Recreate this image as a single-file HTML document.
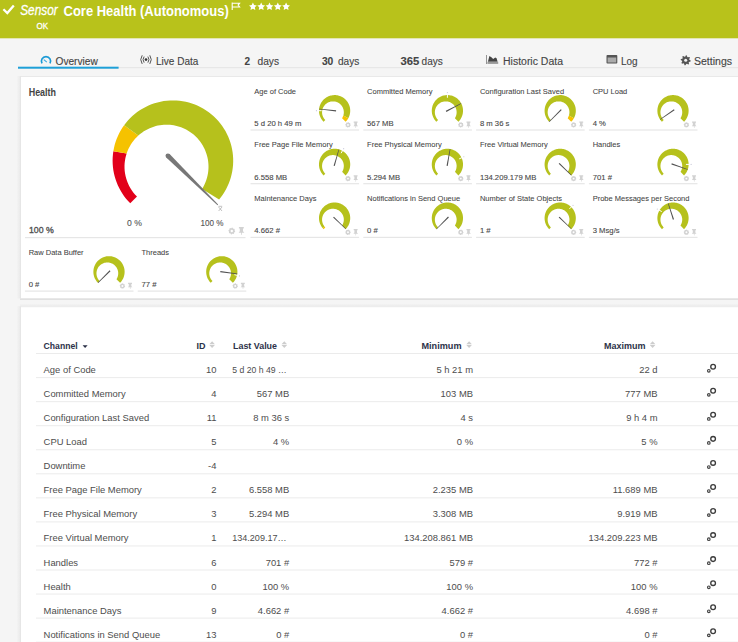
<!DOCTYPE html>
<html><head><meta charset="utf-8"><style>
html,body{margin:0;padding:0;width:738px;height:642px;overflow:hidden;background:#f5f5f5;}
svg{display:block;font-family:"Liberation Sans", sans-serif;}
</style></head><body>
<svg width="738" height="642" viewBox="0 0 738 642">
<rect x="0" y="0" width="738" height="642" fill="#f5f5f5"/>
<rect x="0" y="0" width="738" height="38.3" fill="#b8c21b"/>
<polyline points="3.4,9.2 7.3,13 13.8,5.4" fill="none" stroke="#fff" stroke-width="2.3"/>
<text x="20.20" y="14.70" font-size="14.3" fill="#fff" font-weight="normal" font-style="italic" text-anchor="start" textLength="37.60" lengthAdjust="spacingAndGlyphs"  stroke="#fff" stroke-width="0.3">Sensor</text>
<text x="63.50" y="15.60" font-size="14.2" fill="#fff" font-weight="bold" font-style="normal" text-anchor="start" textLength="165.30" lengthAdjust="spacingAndGlyphs" >Core Health (Autonomous)</text>
<path d="M232.2,2.6 V10 M232.2,3.2 H239.6 L238.1,5.1 L239.6,7.0 H232.2" fill="none" stroke="#fff" stroke-width="1.1"/>
<polygon points="252.90,2.60 254.10,5.04 256.80,5.43 254.85,7.33 255.31,10.02 252.90,8.75 250.49,10.02 250.95,7.33 249.00,5.43 251.70,5.04" fill="#fff"/>
<polygon points="261.20,2.60 262.40,5.04 265.10,5.43 263.15,7.33 263.61,10.02 261.20,8.75 258.79,10.02 259.25,7.33 257.30,5.43 260.00,5.04" fill="#fff"/>
<polygon points="269.50,2.60 270.70,5.04 273.40,5.43 271.45,7.33 271.91,10.02 269.50,8.75 267.09,10.02 267.55,7.33 265.60,5.43 268.30,5.04" fill="#fff"/>
<polygon points="277.80,2.60 279.00,5.04 281.70,5.43 279.75,7.33 280.21,10.02 277.80,8.75 275.39,10.02 275.85,7.33 273.90,5.43 276.60,5.04" fill="#fff"/>
<polygon points="286.10,2.60 287.30,5.04 290.00,5.43 288.05,7.33 288.51,10.02 286.10,8.75 283.69,10.02 284.15,7.33 282.20,5.43 284.90,5.04" fill="#fff"/>
<text x="36.40" y="28.60" font-size="8.8" fill="#fff" font-weight="normal" font-style="normal" text-anchor="start" textLength="11.60" lengthAdjust="spacingAndGlyphs"  stroke="#fff" stroke-width="0.3">OK</text>
<rect x="18" y="67.2" width="720" height="1" fill="#e4e4e4"/>
<rect x="18" y="66.7" width="100.6" height="2" fill="#1ea0d8"/>
<text x="55.50" y="64.50" font-size="10" fill="#444" font-weight="normal" font-style="normal" text-anchor="start" textLength="42.30" lengthAdjust="spacingAndGlyphs"  stroke="#444" stroke-width="0.12">Overview</text>
<text x="156.00" y="64.50" font-size="10" fill="#444" font-weight="normal" font-style="normal" text-anchor="start" textLength="42.30" lengthAdjust="spacingAndGlyphs"  stroke="#444" stroke-width="0.12">Live Data</text>
<text x="244.50" y="64.50" font-size="10" fill="#444" font-weight="bold" font-style="normal" text-anchor="start"  stroke="#444" stroke-width="0.12">2</text>
<text x="257.50" y="64.50" font-size="10" fill="#444" font-weight="normal" font-style="normal" text-anchor="start" textLength="21.50" lengthAdjust="spacingAndGlyphs"  stroke="#444" stroke-width="0.12">days</text>
<text x="321.90" y="64.50" font-size="10" fill="#444" font-weight="bold" font-style="normal" text-anchor="start" textLength="11.40" lengthAdjust="spacingAndGlyphs"  stroke="#444" stroke-width="0.12">30</text>
<text x="338.00" y="64.50" font-size="10" fill="#444" font-weight="normal" font-style="normal" text-anchor="start" textLength="21.30" lengthAdjust="spacingAndGlyphs"  stroke="#444" stroke-width="0.12">days</text>
<text x="400.40" y="64.50" font-size="10" fill="#444" font-weight="bold" font-style="normal" text-anchor="start" textLength="18.80" lengthAdjust="spacingAndGlyphs"  stroke="#444" stroke-width="0.12">365</text>
<text x="421.60" y="64.50" font-size="10" fill="#444" font-weight="normal" font-style="normal" text-anchor="start" textLength="21.20" lengthAdjust="spacingAndGlyphs"  stroke="#444" stroke-width="0.12">days</text>
<text x="503.00" y="64.50" font-size="10" fill="#444" font-weight="normal" font-style="normal" text-anchor="start" textLength="60.00" lengthAdjust="spacingAndGlyphs"  stroke="#444" stroke-width="0.12">Historic Data</text>
<text x="621.00" y="64.50" font-size="10" fill="#444" font-weight="normal" font-style="normal" text-anchor="start" textLength="16.60" lengthAdjust="spacingAndGlyphs"  stroke="#444" stroke-width="0.12">Log</text>
<text x="694.00" y="64.50" font-size="10" fill="#444" font-weight="normal" font-style="normal" text-anchor="start" textLength="38.00" lengthAdjust="spacingAndGlyphs"  stroke="#444" stroke-width="0.12">Settings</text>
<path d="M42.0,63.4 A4.6,4.6 0 1 1 50.0,63.4" fill="none" stroke="#1a9ad6" stroke-width="1.7"/>
<path d="M43.8,59.6 L46.8,62.1" stroke="#3aa6dd" stroke-width="1.1"/>
<circle cx="146" cy="59.6" r="1.35" fill="#333"/>
<path d="M144.1,56.6 A5.2,5.2 0 0 0 144.1,62.6 M147.9,56.6 A5.2,5.2 0 0 1 147.9,62.6 M142.2,55.3 A7.6,7.6 0 0 0 142.2,63.9 M149.8,55.3 A7.6,7.6 0 0 1 149.8,63.9" fill="none" stroke="#555" stroke-width="1"/>
<rect x="486" y="55" width="0.9" height="9" fill="#888"/>
<polygon points="487.9,61.8 489.4,56 491.4,57.3 493.2,59 495.2,57.5 496.6,58.2 497.6,61.8" fill="#444"/>
<rect x="487.4" y="61.8" width="10.8" height="2.1" fill="#9a9a9a"/>
<rect x="606.5" y="55.1" width="10.8" height="8.4" rx="0.8" fill="#555"/>
<rect x="607.6" y="57.5" width="8.6" height="5.0" fill="#aaa"/>
<polygon points="690.69,60.55 690.55,61.51 689.04,61.88 688.67,62.50 689.06,64.00 688.27,64.59 686.95,63.78 686.24,63.96 685.45,65.29 684.49,65.15 684.12,63.64 683.50,63.27 682.00,63.66 681.41,62.87 682.22,61.55 682.04,60.84 680.71,60.05 680.85,59.09 682.36,58.72 682.73,58.10 682.34,56.60 683.13,56.01 684.45,56.82 685.16,56.64 685.95,55.31 686.91,55.45 687.28,56.96 687.90,57.33 689.40,56.94 689.99,57.73 689.18,59.05 689.36,59.76" fill="#555"/><circle cx="685.7" cy="60.3" r="1.5" fill="#f5f5f5"/>
<defs><linearGradient id="shl" x1="0" x2="1" y1="0" y2="0"><stop offset="0" stop-color="#f5f5f5"/><stop offset="1" stop-color="#ebebeb"/></linearGradient><linearGradient id="sht" x1="0" x2="0" y1="0" y2="1"><stop offset="0" stop-color="#f5f5f5"/><stop offset="1" stop-color="#ececec"/></linearGradient></defs>
<rect x="16.5" y="76" width="3.5" height="222.5" fill="url(#shl)"/>
<rect x="16.5" y="306.2" width="3.5" height="340" fill="url(#shl)"/>
<rect x="20" y="303.5" width="720" height="2.7" fill="url(#sht)"/>
<rect x="20" y="76" width="730" height="222.5" fill="#fff"/>
<rect x="20" y="76" width="730" height="1" fill="#e9e9e9"/>
<rect x="20" y="76" width="1" height="222.5" fill="#e6e6e6"/>
<rect x="20" y="298.3" width="718" height="1.7" fill="#e0e0e0"/>
<rect x="20" y="306.2" width="730" height="400" fill="#fff"/>
<rect x="20" y="306.2" width="730" height="1" fill="#e9e9e9"/>
<rect x="20" y="306.2" width="1" height="400" fill="#e6e6e6"/>
<text x="28.70" y="95.60" font-size="10" fill="#444" font-weight="bold" font-style="normal" text-anchor="start" textLength="27.30" lengthAdjust="spacingAndGlyphs" >Health</text>
<polygon points="130.26,203.34 128.09,201.05 126.04,198.65 124.12,196.14 122.33,193.54 120.68,190.85 119.17,188.08 117.81,185.23 116.61,182.31 115.55,179.33 114.65,176.31 113.92,173.24 113.34,170.13 112.93,167.00 112.68,163.86 112.60,160.70 112.68,157.54 112.93,154.40 113.34,151.27 126.67,153.38 125.95,155.77 125.37,158.21 124.93,160.70 124.64,163.23 124.51,165.79 124.53,168.36 124.71,170.94 125.06,173.52 125.56,176.08 126.23,178.62 127.05,181.11 128.03,183.56 129.17,185.95 130.46,188.26 131.89,190.49 133.46,192.63 135.17,194.67 137.00,196.60" fill="#e2001a"/>
<polygon points="113.34,151.27 113.92,148.16 114.65,145.09 115.55,142.07 116.61,139.09 117.81,136.17 119.17,133.32 120.68,130.55 122.33,127.86 124.12,125.26 138.31,135.57 136.65,137.16 135.06,138.85 133.55,140.65 132.14,142.55 130.82,144.55 129.60,146.63 128.50,148.80 127.52,151.05 126.67,153.38" fill="#f5c200"/>
<polygon points="124.12,125.26 126.05,122.74 128.11,120.33 130.30,118.02 132.60,115.84 135.02,113.78 137.54,111.86 140.16,110.06 142.87,108.41 145.66,106.90 148.53,105.54 151.47,104.34 154.46,103.29 157.51,102.40 160.60,101.67 163.72,101.10 166.87,100.70 170.04,100.47 173.21,100.40 176.38,100.50 179.55,100.77 182.69,101.20 185.81,101.80 188.89,102.56 191.93,103.48 194.91,104.56 197.84,105.80 200.69,107.19 203.47,108.72 206.16,110.40 208.76,112.22 211.26,114.18 213.66,116.26 215.94,118.47 218.10,120.79 220.14,123.22 222.05,125.76 223.82,128.40 225.45,131.12 226.93,133.93 228.26,136.81 229.44,139.75 230.47,142.76 231.33,145.81 232.04,148.91 232.57,152.03 232.95,155.19 233.15,158.35 233.19,161.53 233.07,164.70 232.77,167.86 232.31,171.00 231.69,174.11 230.90,177.19 229.95,180.22 228.85,183.19 227.59,186.11 226.17,188.95 224.61,191.71 222.91,194.39 221.07,196.98 219.09,199.46 202.13,188.93 203.26,187.02 204.27,185.07 205.17,183.09 205.96,181.09 206.63,179.08 207.20,177.07 207.66,175.05 208.02,173.03 208.28,171.02 208.44,169.02 208.50,167.04 208.47,165.08 208.35,163.14 208.14,161.22 207.85,159.34 207.48,157.49 207.02,155.66 206.50,153.88 205.89,152.13 205.22,150.42 204.47,148.76 203.66,147.13 202.78,145.55 201.84,144.01 200.84,142.52 199.78,141.08 198.66,139.68 197.48,138.34 196.24,137.05 194.95,135.81 193.61,134.62 192.22,133.49 190.77,132.42 189.28,131.41 187.73,130.46 186.14,129.58 184.51,128.76 182.83,128.00 181.10,127.32 179.34,126.71 177.53,126.17 175.69,125.72 173.81,125.34 171.90,125.05 169.96,124.84 167.99,124.73 166.00,124.70 163.99,124.78 161.96,124.95 159.92,125.22 157.87,125.60 155.82,126.08 153.77,126.68 151.73,127.38 149.71,128.20 147.71,129.14 145.74,130.19 143.81,131.36 141.92,132.64 140.08,134.05 138.31,135.57" fill="#b6c11c"/>
<polygon points="166.23,157.51 217.52,205.18 218.15,204.54 169.59,154.08" fill="#777"/>
<circle cx="167.91" cy="155.79" r="2.4" fill="#777"/>
<path d="M218.4,206.3 H222.2 M218.6,207 L222,211 M222,207 L218.6,211" stroke="#999" stroke-width="0.6"/>
<text x="134.50" y="225.80" font-size="9.6" fill="#555" font-weight="normal" font-style="normal" text-anchor="middle" textLength="14.90" lengthAdjust="spacingAndGlyphs"  stroke="#555" stroke-width="0.12">0 %</text>
<text x="212.00" y="225.80" font-size="9.6" fill="#555" font-weight="normal" font-style="normal" text-anchor="middle" textLength="23.00" lengthAdjust="spacingAndGlyphs"  stroke="#555" stroke-width="0.12">100 %</text>
<text x="29.00" y="233.00" font-size="9.6" fill="#505050" font-weight="normal" font-style="normal" text-anchor="start" textLength="24.80" lengthAdjust="spacingAndGlyphs"  stroke="#505050" stroke-width="0.35">100 %</text>
<polygon points="235.20,231.17 235.10,231.83 234.42,232.24 234.13,232.73 234.08,233.52 233.55,233.92 232.78,233.73 232.23,233.87 231.63,234.40 230.97,234.30 230.56,233.62 230.07,233.33 229.28,233.28 228.88,232.75 229.07,231.98 228.93,231.43 228.40,230.83 228.50,230.17 229.18,229.76 229.47,229.27 229.52,228.48 230.05,228.08 230.82,228.27 231.37,228.13 231.97,227.60 232.63,227.70 233.04,228.38 233.53,228.67 234.32,228.72 234.72,229.25 234.53,230.02 234.67,230.57" fill="#d2d2d2"/><circle cx="231.8" cy="231.0" r="1.2" fill="#fff"/>
<polygon points="238.90,226.90 243.80,226.90 243.80,228.40 243.00,228.40 243.00,231.20 244.40,232.70 242.00,232.70 241.80,234.90 241.30,234.90 241.10,232.70 238.60,232.70 239.80,231.20 239.80,228.40 238.90,228.40" fill="#d2d2d2"/>
<rect x="25" y="237" width="220.5" height="1.2" fill="#e6e6e6"/>
<text x="254.30" y="93.50" font-size="7.5" fill="#444" font-weight="normal" font-style="normal" text-anchor="start"  stroke="#444" stroke-width="0.06">Age of Code</text>
<text x="254.30" y="125.90" font-size="8.1" fill="#484848" font-weight="normal" font-style="normal" text-anchor="start" textLength="47.06" lengthAdjust="spacingAndGlyphs"  stroke="#484848" stroke-width="0.12">5 d 20 h 49 m</text>
<polygon points="323.56,121.74 322.99,121.15 322.46,120.52 321.95,119.87 321.49,119.19 321.06,118.48 320.67,117.76 320.32,117.01 320.00,116.25 319.73,115.48 319.50,114.69 319.31,113.88 319.16,113.07 319.06,112.26 319.00,111.44 318.98,110.61 319.01,109.79 319.08,108.97 319.19,108.15 319.35,107.34 319.55,106.55 319.79,105.76 320.07,104.98 320.39,104.23 320.75,103.49 321.15,102.77 321.59,102.07 322.06,101.39 322.57,100.74 323.11,100.12 323.68,99.53 324.28,98.97 324.92,98.45 325.58,97.95 326.26,97.49 326.97,97.07 327.70,96.69 328.45,96.35 329.21,96.04 329.99,95.78 330.78,95.56 331.59,95.38 332.40,95.24 333.22,95.14 334.04,95.09 334.86,95.08 335.69,95.12 336.51,95.20 337.32,95.32 338.13,95.49 338.92,95.69 339.71,95.94 340.48,96.23 341.23,96.56 341.97,96.93 342.69,97.34 343.38,97.78 344.05,98.26 344.69,98.78 345.30,99.33 345.89,99.91 346.44,100.52 346.96,101.16 347.45,101.82 347.90,102.51 348.31,103.22 348.69,103.96 349.02,104.71 349.32,105.48 349.57,106.26 349.79,107.05 349.96,107.86 350.09,108.67 350.17,109.49 350.21,110.31 350.21,111.14 350.17,111.96 350.08,112.78 349.95,113.59 349.77,114.40 349.56,115.19 349.30,115.97 349.00,116.74 348.66,117.49 348.29,118.22 343.33,115.50 343.47,114.98 343.59,114.47 343.69,113.96 343.75,113.45 343.80,112.94 343.82,112.44 343.82,111.94 343.79,111.44 343.74,110.96 343.67,110.48 343.58,110.00 343.48,109.54 343.35,109.08 343.20,108.64 343.04,108.20 342.85,107.77 342.65,107.35 342.44,106.95 342.21,106.55 341.96,106.17 341.70,105.80 341.42,105.44 341.13,105.09 340.82,104.75 340.50,104.43 340.17,104.12 339.82,103.83 339.46,103.55 339.09,103.28 338.71,103.03 338.31,102.79 337.90,102.57 337.48,102.37 337.05,102.18 336.61,102.01 336.16,101.86 335.70,101.73 335.23,101.62 334.75,101.53 334.27,101.46 333.77,101.41 333.27,101.38 332.77,101.38 332.26,101.40 331.74,101.44 331.22,101.51 330.70,101.61 330.18,101.73 329.66,101.88 329.14,102.06 328.63,102.27 328.12,102.50 327.62,102.77 327.13,103.06 326.65,103.38 326.18,103.73 325.73,104.11 325.29,104.52 324.87,104.96 324.47,105.43 324.10,105.92 323.75,106.43 323.43,106.97 323.14,107.54 322.88,108.12 322.65,108.73 322.46,109.35 322.30,109.98 322.19,110.63 322.11,111.29 322.07,111.96 322.07,112.63 322.11,113.30 322.20,113.97 322.33,114.64 322.50,115.30 322.71,115.96 322.97,116.59 323.26,117.22 323.60,117.82 323.97,118.40 324.38,118.96 324.82,119.50 325.30,120.00" fill="#b6c11c"/>
<polygon points="348.29,118.22 347.84,118.99 347.35,119.72 346.82,120.43 346.25,121.10 345.64,121.74 342.07,118.17 342.39,117.65 342.67,117.12 342.92,116.59 343.14,116.04 343.33,115.50" fill="#f5c200"/>
<line x1="321.65" y1="110.70" x2="317.51" y2="110.70" stroke="#fff" stroke-width="1.0"/>
<circle cx="316.47" cy="110.70" r="0.6" fill="#c8c8d8"/>
<polygon points="336.15,110.26 319.18,108.78 319.11,109.37 336.03,111.45" fill="#505050"/>
<polygon points="350.72,125.03 350.64,125.56 350.10,125.89 349.86,126.28 349.83,126.92 349.40,127.23 348.78,127.08 348.34,127.19 347.87,127.62 347.34,127.54 347.01,127.00 346.62,126.76 345.98,126.73 345.67,126.30 345.82,125.68 345.71,125.24 345.28,124.77 345.36,124.24 345.90,123.91 346.14,123.52 346.17,122.88 346.60,122.57 347.22,122.72 347.66,122.61 348.13,122.18 348.66,122.26 348.99,122.80 349.38,123.04 350.02,123.07 350.33,123.50 350.18,124.12 350.29,124.56" fill="#d2d2d2"/><circle cx="348.0" cy="124.9" r="0.96" fill="#fff"/>
<polygon points="353.68,121.62 357.60,121.62 357.60,122.82 356.96,122.82 356.96,125.06 358.08,126.26 356.16,126.26 356.00,128.02 355.60,128.02 355.44,126.26 353.44,126.26 354.40,125.06 354.40,122.82 353.68,122.82" fill="#d2d2d2"/>
<rect x="250.5" y="129.40" width="108.6" height="1.2" fill="#e6e6e6"/>
<text x="367.10" y="93.50" font-size="7.5" fill="#444" font-weight="normal" font-style="normal" text-anchor="start"  stroke="#444" stroke-width="0.06">Committed Memory</text>
<text x="367.10" y="125.90" font-size="8.1" fill="#484848" font-weight="normal" font-style="normal" text-anchor="start" textLength="26.52" lengthAdjust="spacingAndGlyphs"  stroke="#484848" stroke-width="0.12">567 MB</text>
<polygon points="436.36,121.74 435.79,121.15 435.26,120.53 434.77,119.88 434.30,119.21 433.87,118.51 433.48,117.79 433.13,117.05 432.82,116.30 432.55,115.53 432.31,114.74 432.12,113.95 431.97,113.14 431.87,112.33 431.80,111.52 431.78,110.70 431.80,109.88 431.87,109.07 431.97,108.26 432.12,107.45 432.31,106.66 432.55,105.87 432.82,105.10 433.13,104.35 433.48,103.61 433.87,102.89 434.30,102.19 434.77,101.52 435.26,100.87 435.79,100.25 436.36,99.66 436.95,99.09 437.57,98.56 438.22,98.07 438.89,97.60 439.59,97.17 440.31,96.78 441.05,96.43 441.80,96.12 442.57,95.85 443.36,95.61 444.15,95.42 444.96,95.27 445.77,95.17 446.58,95.10 447.40,95.08 448.22,95.10 449.03,95.17 449.84,95.27 450.65,95.42 451.44,95.61 452.23,95.85 453.00,96.12 453.75,96.43 454.49,96.78 455.21,97.17 455.91,97.60 456.58,98.07 457.23,98.56 457.85,99.09 458.44,99.66 459.01,100.25 459.54,100.87 460.03,101.52 460.50,102.19 460.93,102.89 461.32,103.61 461.67,104.35 461.98,105.10 462.25,105.87 462.49,106.66 462.68,107.45 462.83,108.26 462.93,109.07 463.00,109.88 463.02,110.70 463.00,111.52 462.93,112.33 462.83,113.14 462.68,113.95 462.49,114.74 462.25,115.53 461.98,116.30 461.67,117.05 461.32,117.79 460.93,118.51 460.50,119.21 460.03,119.88 459.54,120.53 459.01,121.15 458.44,121.74 454.87,118.17 455.16,117.69 455.43,117.20 455.67,116.71 455.88,116.21 456.06,115.70 456.22,115.19 456.35,114.68 456.45,114.17 456.53,113.67 456.58,113.16 456.61,112.66 456.62,112.16 456.60,111.67 456.57,111.18 456.51,110.70 456.43,110.23 456.33,109.76 456.21,109.30 456.08,108.86 455.92,108.42 455.75,107.99 455.56,107.57 455.35,107.16 455.13,106.76 454.89,106.37 454.64,106.00 454.37,105.63 454.09,105.28 453.80,104.94 453.49,104.61 453.16,104.30 452.83,104.00 452.48,103.71 452.12,103.44 451.74,103.18 451.36,102.94 450.96,102.71 450.55,102.50 450.13,102.30 449.70,102.12 449.26,101.96 448.81,101.82 448.35,101.69 447.88,101.59 447.40,101.50 446.91,101.44 446.42,101.40 445.92,101.38 445.42,101.38 444.91,101.41 444.40,101.46 443.88,101.54 443.37,101.64 442.85,101.77 442.33,101.92 441.82,102.11 441.31,102.32 440.81,102.56 440.31,102.83 439.83,103.13 439.35,103.45 438.89,103.81 438.44,104.19 438.01,104.60 437.60,105.04 437.21,105.51 436.84,106.00 436.50,106.52 436.19,107.06 435.90,107.62 435.65,108.20 435.43,108.80 435.24,109.42 435.09,110.05 434.98,110.70 434.90,111.36 434.87,112.02 434.87,112.68 434.92,113.35 435.01,114.02 435.14,114.68 435.31,115.34 435.53,115.99 435.78,116.62 436.07,117.24 436.41,117.84 436.78,118.42 437.19,118.97 437.63,119.50 438.10,120.00" fill="#b6c11c"/>
<line x1="447.40" y1="97.75" x2="447.40" y2="93.61" stroke="#fff" stroke-width="1.0"/>
<circle cx="447.40" cy="92.57" r="0.6" fill="#c8c8d8"/>
<polygon points="446.36,111.93 461.26,103.67 460.98,103.14 445.79,110.87" fill="#505050"/>
<polygon points="463.52,125.03 463.44,125.56 462.90,125.89 462.66,126.28 462.63,126.92 462.20,127.23 461.58,127.08 461.14,127.19 460.67,127.62 460.14,127.54 459.81,127.00 459.42,126.76 458.78,126.73 458.47,126.30 458.62,125.68 458.51,125.24 458.08,124.77 458.16,124.24 458.70,123.91 458.94,123.52 458.97,122.88 459.40,122.57 460.02,122.72 460.46,122.61 460.93,122.18 461.46,122.26 461.79,122.80 462.18,123.04 462.82,123.07 463.13,123.50 462.98,124.12 463.09,124.56" fill="#d2d2d2"/><circle cx="460.8" cy="124.9" r="0.96" fill="#fff"/>
<polygon points="466.48,121.62 470.40,121.62 470.40,122.82 469.76,122.82 469.76,125.06 470.88,126.26 468.96,126.26 468.80,128.02 468.40,128.02 468.24,126.26 466.24,126.26 467.20,125.06 467.20,122.82 466.48,122.82" fill="#d2d2d2"/>
<rect x="363.3" y="129.40" width="108.6" height="1.2" fill="#e6e6e6"/>
<text x="479.90" y="93.50" font-size="7.5" fill="#444" font-weight="normal" font-style="normal" text-anchor="start"  stroke="#444" stroke-width="0.06">Configuration Last Saved</text>
<text x="479.90" y="125.90" font-size="8.1" fill="#484848" font-weight="normal" font-style="normal" text-anchor="start" textLength="29.51" lengthAdjust="spacingAndGlyphs"  stroke="#484848" stroke-width="0.12">8 m 36 s</text>
<polygon points="549.16,121.74 548.59,121.15 548.06,120.52 547.55,119.87 547.09,119.19 546.66,118.48 546.27,117.76 545.92,117.01 545.60,116.25 545.33,115.48 545.10,114.69 544.91,113.88 544.76,113.07 544.66,112.26 544.60,111.44 544.58,110.61 544.61,109.79 544.68,108.97 544.79,108.15 544.95,107.34 545.15,106.55 545.39,105.76 545.67,104.98 545.99,104.23 546.35,103.49 546.75,102.77 547.19,102.07 547.66,101.39 548.17,100.74 548.71,100.12 549.28,99.53 549.88,98.97 550.52,98.45 551.18,97.95 551.86,97.49 552.57,97.07 553.30,96.69 554.05,96.35 554.81,96.04 555.59,95.78 556.38,95.56 557.19,95.38 558.00,95.24 558.82,95.14 559.64,95.09 560.46,95.08 561.29,95.12 562.11,95.20 562.92,95.32 563.73,95.49 564.52,95.69 565.31,95.94 566.08,96.23 566.83,96.56 567.57,96.93 568.29,97.34 568.98,97.78 569.65,98.26 570.29,98.78 570.90,99.33 571.49,99.91 572.04,100.52 572.56,101.16 573.05,101.82 573.50,102.51 573.91,103.22 574.29,103.96 574.62,104.71 574.92,105.48 575.17,106.26 575.39,107.05 575.56,107.86 575.69,108.67 575.77,109.49 575.81,110.31 575.81,111.14 575.77,111.96 575.68,112.78 575.55,113.59 575.37,114.40 575.16,115.19 574.90,115.97 574.60,116.74 574.26,117.49 573.89,118.22 568.93,115.50 569.07,114.98 569.19,114.47 569.29,113.96 569.35,113.45 569.40,112.94 569.42,112.44 569.42,111.94 569.39,111.44 569.34,110.96 569.27,110.48 569.18,110.00 569.08,109.54 568.95,109.08 568.80,108.64 568.64,108.20 568.45,107.77 568.25,107.35 568.04,106.95 567.81,106.55 567.56,106.17 567.30,105.80 567.02,105.44 566.73,105.09 566.42,104.75 566.10,104.43 565.77,104.12 565.42,103.83 565.06,103.55 564.69,103.28 564.31,103.03 563.91,102.79 563.50,102.57 563.08,102.37 562.65,102.18 562.21,102.01 561.76,101.86 561.30,101.73 560.83,101.62 560.35,101.53 559.87,101.46 559.37,101.41 558.87,101.38 558.37,101.38 557.86,101.40 557.34,101.44 556.82,101.51 556.30,101.61 555.78,101.73 555.26,101.88 554.74,102.06 554.23,102.27 553.72,102.50 553.22,102.77 552.73,103.06 552.25,103.38 551.78,103.73 551.33,104.11 550.89,104.52 550.47,104.96 550.07,105.43 549.70,105.92 549.35,106.43 549.03,106.97 548.74,107.54 548.48,108.12 548.25,108.73 548.06,109.35 547.90,109.98 547.79,110.63 547.71,111.29 547.67,111.96 547.67,112.63 547.71,113.30 547.80,113.97 547.93,114.64 548.10,115.30 548.31,115.96 548.57,116.59 548.86,117.22 549.20,117.82 549.57,118.40 549.98,118.96 550.42,119.50 550.90,120.00" fill="#b6c11c"/>
<polygon points="573.89,118.22 573.44,118.99 572.95,119.72 572.42,120.43 571.85,121.10 571.24,121.74 567.67,118.17 567.99,117.65 568.27,117.12 568.52,116.59 568.74,116.04 568.93,115.50" fill="#f5c200"/>
<polygon points="560.84,109.22 549.00,121.48 549.42,121.90 561.68,110.06" fill="#505050"/>
<polygon points="576.32,125.03 576.24,125.56 575.70,125.89 575.46,126.28 575.43,126.92 575.00,127.23 574.38,127.08 573.94,127.19 573.47,127.62 572.94,127.54 572.61,127.00 572.22,126.76 571.58,126.73 571.27,126.30 571.42,125.68 571.31,125.24 570.88,124.77 570.96,124.24 571.50,123.91 571.74,123.52 571.77,122.88 572.20,122.57 572.82,122.72 573.26,122.61 573.73,122.18 574.26,122.26 574.59,122.80 574.98,123.04 575.62,123.07 575.93,123.50 575.78,124.12 575.89,124.56" fill="#d2d2d2"/><circle cx="573.6" cy="124.9" r="0.96" fill="#fff"/>
<polygon points="579.28,121.62 583.20,121.62 583.20,122.82 582.56,122.82 582.56,125.06 583.68,126.26 581.76,126.26 581.60,128.02 581.20,128.02 581.04,126.26 579.04,126.26 580.00,125.06 580.00,122.82 579.28,122.82" fill="#d2d2d2"/>
<rect x="476.1" y="129.40" width="108.6" height="1.2" fill="#e6e6e6"/>
<text x="592.70" y="93.50" font-size="7.5" fill="#444" font-weight="normal" font-style="normal" text-anchor="start"  stroke="#444" stroke-width="0.06">CPU Load</text>
<text x="592.70" y="125.90" font-size="8.1" fill="#484848" font-weight="normal" font-style="normal" text-anchor="start" textLength="13.26" lengthAdjust="spacingAndGlyphs"  stroke="#484848" stroke-width="0.12">4 %</text>
<polygon points="661.96,121.74 661.39,121.15 660.86,120.53 660.37,119.88 659.90,119.21 659.47,118.51 659.08,117.79 658.73,117.05 658.42,116.30 658.15,115.53 657.91,114.74 657.72,113.95 657.57,113.14 657.47,112.33 657.40,111.52 657.38,110.70 657.40,109.88 657.47,109.07 657.57,108.26 657.72,107.45 657.91,106.66 658.15,105.87 658.42,105.10 658.73,104.35 659.08,103.61 659.47,102.89 659.90,102.19 660.37,101.52 660.86,100.87 661.39,100.25 661.96,99.66 662.55,99.09 663.17,98.56 663.82,98.07 664.49,97.60 665.19,97.17 665.91,96.78 666.65,96.43 667.40,96.12 668.17,95.85 668.96,95.61 669.75,95.42 670.56,95.27 671.37,95.17 672.18,95.10 673.00,95.08 673.82,95.10 674.63,95.17 675.44,95.27 676.25,95.42 677.04,95.61 677.83,95.85 678.60,96.12 679.35,96.43 680.09,96.78 680.81,97.17 681.51,97.60 682.18,98.07 682.83,98.56 683.45,99.09 684.04,99.66 684.61,100.25 685.14,100.87 685.63,101.52 686.10,102.19 686.53,102.89 686.92,103.61 687.27,104.35 687.58,105.10 687.85,105.87 688.09,106.66 688.28,107.45 688.43,108.26 688.53,109.07 688.60,109.88 688.62,110.70 688.60,111.52 688.53,112.33 688.43,113.14 688.28,113.95 688.09,114.74 687.85,115.53 687.58,116.30 687.27,117.05 686.92,117.79 686.53,118.51 686.10,119.21 685.63,119.88 685.14,120.53 684.61,121.15 684.04,121.74 680.47,118.17 680.76,117.69 681.03,117.20 681.27,116.71 681.48,116.21 681.66,115.70 681.82,115.19 681.95,114.68 682.05,114.17 682.13,113.67 682.18,113.16 682.21,112.66 682.22,112.16 682.20,111.67 682.17,111.18 682.11,110.70 682.03,110.23 681.93,109.76 681.81,109.30 681.68,108.86 681.52,108.42 681.35,107.99 681.16,107.57 680.95,107.16 680.73,106.76 680.49,106.37 680.24,106.00 679.97,105.63 679.69,105.28 679.40,104.94 679.09,104.61 678.76,104.30 678.43,104.00 678.08,103.71 677.72,103.44 677.34,103.18 676.96,102.94 676.56,102.71 676.15,102.50 675.73,102.30 675.30,102.12 674.86,101.96 674.41,101.82 673.95,101.69 673.48,101.59 673.00,101.50 672.51,101.44 672.02,101.40 671.52,101.38 671.02,101.38 670.51,101.41 670.00,101.46 669.48,101.54 668.97,101.64 668.45,101.77 667.93,101.92 667.42,102.11 666.91,102.32 666.41,102.56 665.91,102.83 665.43,103.13 664.95,103.45 664.49,103.81 664.04,104.19 663.61,104.60 663.20,105.04 662.81,105.51 662.44,106.00 662.10,106.52 661.79,107.06 661.50,107.62 661.25,108.20 661.03,108.80 660.84,109.42 660.69,110.05 660.58,110.70 660.50,111.36 660.47,112.02 660.47,112.68 660.52,113.35 660.61,114.02 660.74,114.68 660.91,115.34 661.13,115.99 661.38,116.62 661.67,117.24 662.01,117.84 662.38,118.42 662.79,118.97 663.23,119.50 663.70,120.00" fill="#b6c11c"/>
<polygon points="673.91,109.36 659.95,119.14 660.28,119.64 674.58,110.36" fill="#505050"/>
<polygon points="689.12,125.03 689.04,125.56 688.50,125.89 688.26,126.28 688.23,126.92 687.80,127.23 687.18,127.08 686.74,127.19 686.27,127.62 685.74,127.54 685.41,127.00 685.02,126.76 684.38,126.73 684.07,126.30 684.22,125.68 684.11,125.24 683.68,124.77 683.76,124.24 684.30,123.91 684.54,123.52 684.57,122.88 685.00,122.57 685.62,122.72 686.06,122.61 686.53,122.18 687.06,122.26 687.39,122.80 687.78,123.04 688.42,123.07 688.73,123.50 688.58,124.12 688.69,124.56" fill="#d2d2d2"/><circle cx="686.4" cy="124.9" r="0.96" fill="#fff"/>
<polygon points="692.08,121.62 696.00,121.62 696.00,122.82 695.36,122.82 695.36,125.06 696.48,126.26 694.56,126.26 694.40,128.02 694.00,128.02 693.84,126.26 691.84,126.26 692.80,125.06 692.80,122.82 692.08,122.82" fill="#d2d2d2"/>
<rect x="588.9" y="129.40" width="108.6" height="1.2" fill="#e6e6e6"/>
<text x="254.30" y="147.20" font-size="7.5" fill="#444" font-weight="normal" font-style="normal" text-anchor="start"  stroke="#444" stroke-width="0.06">Free Page File Memory</text>
<text x="254.30" y="179.60" font-size="8.1" fill="#484848" font-weight="normal" font-style="normal" text-anchor="start" textLength="32.94" lengthAdjust="spacingAndGlyphs"  stroke="#484848" stroke-width="0.12">6.558 MB</text>
<polygon points="323.56,175.44 322.99,174.85 322.46,174.23 321.97,173.58 321.50,172.91 321.07,172.21 320.68,171.49 320.33,170.75 320.02,170.00 319.75,169.23 319.51,168.44 319.32,167.65 319.17,166.84 319.07,166.03 319.00,165.22 318.98,164.40 319.00,163.58 319.07,162.77 319.17,161.96 319.32,161.15 319.51,160.36 319.75,159.57 320.02,158.80 320.33,158.05 320.68,157.31 321.07,156.59 321.50,155.89 321.97,155.22 322.46,154.57 322.99,153.95 323.56,153.36 324.15,152.79 324.77,152.26 325.42,151.77 326.09,151.30 326.79,150.87 327.51,150.48 328.25,150.13 329.00,149.82 329.77,149.55 330.56,149.31 331.35,149.12 332.16,148.97 332.97,148.87 333.78,148.80 334.60,148.78 335.42,148.80 336.23,148.87 337.04,148.97 337.85,149.12 338.64,149.31 339.43,149.55 340.20,149.82 340.95,150.13 341.69,150.48 342.41,150.87 343.11,151.30 343.78,151.77 344.43,152.26 345.05,152.79 345.64,153.36 346.21,153.95 346.74,154.57 347.23,155.22 347.70,155.89 348.13,156.59 348.52,157.31 348.87,158.05 349.18,158.80 349.45,159.57 349.69,160.36 349.88,161.15 350.03,161.96 350.13,162.77 350.20,163.58 350.22,164.40 350.20,165.22 350.13,166.03 350.03,166.84 349.88,167.65 349.69,168.44 349.45,169.23 349.18,170.00 348.87,170.75 348.52,171.49 348.13,172.21 347.70,172.91 347.23,173.58 346.74,174.23 346.21,174.85 345.64,175.44 342.07,171.87 342.36,171.39 342.63,170.90 342.87,170.41 343.08,169.91 343.26,169.40 343.42,168.89 343.55,168.38 343.65,167.87 343.73,167.37 343.78,166.86 343.81,166.36 343.82,165.86 343.80,165.37 343.77,164.88 343.71,164.40 343.63,163.93 343.53,163.46 343.41,163.00 343.28,162.56 343.12,162.12 342.95,161.69 342.76,161.27 342.55,160.86 342.33,160.46 342.09,160.07 341.84,159.70 341.57,159.33 341.29,158.98 341.00,158.64 340.69,158.31 340.36,158.00 340.03,157.70 339.68,157.41 339.32,157.14 338.94,156.88 338.56,156.64 338.16,156.41 337.75,156.20 337.33,156.00 336.90,155.82 336.46,155.66 336.01,155.52 335.55,155.39 335.08,155.29 334.60,155.20 334.11,155.14 333.62,155.10 333.12,155.08 332.62,155.08 332.11,155.11 331.60,155.16 331.08,155.24 330.57,155.34 330.05,155.47 329.53,155.62 329.02,155.81 328.51,156.02 328.01,156.26 327.51,156.53 327.03,156.83 326.55,157.15 326.09,157.51 325.64,157.89 325.21,158.30 324.80,158.74 324.41,159.21 324.04,159.70 323.70,160.22 323.39,160.76 323.10,161.32 322.85,161.90 322.63,162.50 322.44,163.12 322.29,163.75 322.18,164.40 322.10,165.06 322.07,165.72 322.07,166.38 322.12,167.05 322.21,167.72 322.34,168.38 322.51,169.04 322.73,169.69 322.98,170.32 323.27,170.94 323.61,171.54 323.98,172.12 324.39,172.67 324.83,173.20 325.30,173.70" fill="#b6c11c"/>
<line x1="341.08" y1="153.18" x2="343.15" y2="149.60" stroke="#fff" stroke-width="1.0"/>
<circle cx="343.67" cy="148.70" r="0.6" fill="#c8c8d8"/>
<polygon points="334.76,166.01 339.17,149.54 338.60,149.38 333.61,165.68" fill="#505050"/>
<polygon points="350.72,178.73 350.64,179.26 350.10,179.59 349.86,179.98 349.83,180.62 349.40,180.93 348.78,180.78 348.34,180.89 347.87,181.32 347.34,181.24 347.01,180.70 346.62,180.46 345.98,180.43 345.67,180.00 345.82,179.38 345.71,178.94 345.28,178.47 345.36,177.94 345.90,177.61 346.14,177.22 346.17,176.58 346.60,176.27 347.22,176.42 347.66,176.31 348.13,175.88 348.66,175.96 348.99,176.50 349.38,176.74 350.02,176.77 350.33,177.20 350.18,177.82 350.29,178.26" fill="#d2d2d2"/><circle cx="348.0" cy="178.6" r="0.96" fill="#fff"/>
<polygon points="353.68,175.32 357.60,175.32 357.60,176.52 356.96,176.52 356.96,178.76 358.08,179.96 356.16,179.96 356.00,181.72 355.60,181.72 355.44,179.96 353.44,179.96 354.40,178.76 354.40,176.52 353.68,176.52" fill="#d2d2d2"/>
<rect x="250.5" y="183.10" width="108.6" height="1.2" fill="#e6e6e6"/>
<text x="367.10" y="147.20" font-size="7.5" fill="#444" font-weight="normal" font-style="normal" text-anchor="start"  stroke="#444" stroke-width="0.06">Free Physical Memory</text>
<text x="367.10" y="179.60" font-size="8.1" fill="#484848" font-weight="normal" font-style="normal" text-anchor="start" textLength="32.94" lengthAdjust="spacingAndGlyphs"  stroke="#484848" stroke-width="0.12">5.294 MB</text>
<polygon points="436.36,175.44 435.79,174.85 435.26,174.23 434.77,173.58 434.30,172.91 433.87,172.21 433.48,171.49 433.13,170.75 432.82,170.00 432.55,169.23 432.31,168.44 432.12,167.65 431.97,166.84 431.87,166.03 431.80,165.22 431.78,164.40 431.80,163.58 431.87,162.77 431.97,161.96 432.12,161.15 432.31,160.36 432.55,159.57 432.82,158.80 433.13,158.05 433.48,157.31 433.87,156.59 434.30,155.89 434.77,155.22 435.26,154.57 435.79,153.95 436.36,153.36 436.95,152.79 437.57,152.26 438.22,151.77 438.89,151.30 439.59,150.87 440.31,150.48 441.05,150.13 441.80,149.82 442.57,149.55 443.36,149.31 444.15,149.12 444.96,148.97 445.77,148.87 446.58,148.80 447.40,148.78 448.22,148.80 449.03,148.87 449.84,148.97 450.65,149.12 451.44,149.31 452.23,149.55 453.00,149.82 453.75,150.13 454.49,150.48 455.21,150.87 455.91,151.30 456.58,151.77 457.23,152.26 457.85,152.79 458.44,153.36 459.01,153.95 459.54,154.57 460.03,155.22 460.50,155.89 460.93,156.59 461.32,157.31 461.67,158.05 461.98,158.80 462.25,159.57 462.49,160.36 462.68,161.15 462.83,161.96 462.93,162.77 463.00,163.58 463.02,164.40 463.00,165.22 462.93,166.03 462.83,166.84 462.68,167.65 462.49,168.44 462.25,169.23 461.98,170.00 461.67,170.75 461.32,171.49 460.93,172.21 460.50,172.91 460.03,173.58 459.54,174.23 459.01,174.85 458.44,175.44 454.87,171.87 455.16,171.39 455.43,170.90 455.67,170.41 455.88,169.91 456.06,169.40 456.22,168.89 456.35,168.38 456.45,167.87 456.53,167.37 456.58,166.86 456.61,166.36 456.62,165.86 456.60,165.37 456.57,164.88 456.51,164.40 456.43,163.93 456.33,163.46 456.21,163.00 456.08,162.56 455.92,162.12 455.75,161.69 455.56,161.27 455.35,160.86 455.13,160.46 454.89,160.07 454.64,159.70 454.37,159.33 454.09,158.98 453.80,158.64 453.49,158.31 453.16,158.00 452.83,157.70 452.48,157.41 452.12,157.14 451.74,156.88 451.36,156.64 450.96,156.41 450.55,156.20 450.13,156.00 449.70,155.82 449.26,155.66 448.81,155.52 448.35,155.39 447.88,155.29 447.40,155.20 446.91,155.14 446.42,155.10 445.92,155.08 445.42,155.08 444.91,155.11 444.40,155.16 443.88,155.24 443.37,155.34 442.85,155.47 442.33,155.62 441.82,155.81 441.31,156.02 440.81,156.26 440.31,156.53 439.83,156.83 439.35,157.15 438.89,157.51 438.44,157.89 438.01,158.30 437.60,158.74 437.21,159.21 436.84,159.70 436.50,160.22 436.19,160.76 435.90,161.32 435.65,161.90 435.43,162.50 435.24,163.12 435.09,163.75 434.98,164.40 434.90,165.06 434.87,165.72 434.87,166.38 434.92,167.05 435.01,167.72 435.14,168.38 435.31,169.04 435.53,169.69 435.78,170.32 436.07,170.94 436.41,171.54 436.78,172.12 437.19,172.67 437.63,173.20 438.10,173.70" fill="#b6c11c"/>
<line x1="459.14" y1="158.93" x2="462.89" y2="157.18" stroke="#fff" stroke-width="1.0"/>
<circle cx="463.83" cy="156.74" r="0.6" fill="#c8c8d8"/>
<polygon points="447.73,165.98 450.39,149.15 449.80,149.04 446.55,165.77" fill="#505050"/>
<polygon points="463.52,178.73 463.44,179.26 462.90,179.59 462.66,179.98 462.63,180.62 462.20,180.93 461.58,180.78 461.14,180.89 460.67,181.32 460.14,181.24 459.81,180.70 459.42,180.46 458.78,180.43 458.47,180.00 458.62,179.38 458.51,178.94 458.08,178.47 458.16,177.94 458.70,177.61 458.94,177.22 458.97,176.58 459.40,176.27 460.02,176.42 460.46,176.31 460.93,175.88 461.46,175.96 461.79,176.50 462.18,176.74 462.82,176.77 463.13,177.20 462.98,177.82 463.09,178.26" fill="#d2d2d2"/><circle cx="460.8" cy="178.6" r="0.96" fill="#fff"/>
<polygon points="466.48,175.32 470.40,175.32 470.40,176.52 469.76,176.52 469.76,178.76 470.88,179.96 468.96,179.96 468.80,181.72 468.40,181.72 468.24,179.96 466.24,179.96 467.20,178.76 467.20,176.52 466.48,176.52" fill="#d2d2d2"/>
<rect x="363.3" y="183.10" width="108.6" height="1.2" fill="#e6e6e6"/>
<text x="479.90" y="147.20" font-size="7.5" fill="#444" font-weight="normal" font-style="normal" text-anchor="start"  stroke="#444" stroke-width="0.06">Free Virtual Memory</text>
<text x="479.90" y="179.60" font-size="8.1" fill="#484848" font-weight="normal" font-style="normal" text-anchor="start" textLength="56.47" lengthAdjust="spacingAndGlyphs"  stroke="#484848" stroke-width="0.12">134.209.179 MB</text>
<polygon points="549.16,175.44 548.59,174.85 548.06,174.23 547.57,173.58 547.10,172.91 546.67,172.21 546.28,171.49 545.93,170.75 545.62,170.00 545.35,169.23 545.11,168.44 544.92,167.65 544.77,166.84 544.67,166.03 544.60,165.22 544.58,164.40 544.60,163.58 544.67,162.77 544.77,161.96 544.92,161.15 545.11,160.36 545.35,159.57 545.62,158.80 545.93,158.05 546.28,157.31 546.67,156.59 547.10,155.89 547.57,155.22 548.06,154.57 548.59,153.95 549.16,153.36 549.75,152.79 550.37,152.26 551.02,151.77 551.69,151.30 552.39,150.87 553.11,150.48 553.85,150.13 554.60,149.82 555.37,149.55 556.16,149.31 556.95,149.12 557.76,148.97 558.57,148.87 559.38,148.80 560.20,148.78 561.02,148.80 561.83,148.87 562.64,148.97 563.45,149.12 564.24,149.31 565.03,149.55 565.80,149.82 566.55,150.13 567.29,150.48 568.01,150.87 568.71,151.30 569.38,151.77 570.03,152.26 570.65,152.79 571.24,153.36 571.81,153.95 572.34,154.57 572.83,155.22 573.30,155.89 573.73,156.59 574.12,157.31 574.47,158.05 574.78,158.80 575.05,159.57 575.29,160.36 575.48,161.15 575.63,161.96 575.73,162.77 575.80,163.58 575.82,164.40 575.80,165.22 575.73,166.03 575.63,166.84 575.48,167.65 575.29,168.44 575.05,169.23 574.78,170.00 574.47,170.75 574.12,171.49 573.73,172.21 573.30,172.91 572.83,173.58 572.34,174.23 571.81,174.85 571.24,175.44 567.67,171.87 567.96,171.39 568.23,170.90 568.47,170.41 568.68,169.91 568.86,169.40 569.02,168.89 569.15,168.38 569.25,167.87 569.33,167.37 569.38,166.86 569.41,166.36 569.42,165.86 569.40,165.37 569.37,164.88 569.31,164.40 569.23,163.93 569.13,163.46 569.01,163.00 568.88,162.56 568.72,162.12 568.55,161.69 568.36,161.27 568.15,160.86 567.93,160.46 567.69,160.07 567.44,159.70 567.17,159.33 566.89,158.98 566.60,158.64 566.29,158.31 565.96,158.00 565.63,157.70 565.28,157.41 564.92,157.14 564.54,156.88 564.16,156.64 563.76,156.41 563.35,156.20 562.93,156.00 562.50,155.82 562.06,155.66 561.61,155.52 561.15,155.39 560.68,155.29 560.20,155.20 559.71,155.14 559.22,155.10 558.72,155.08 558.22,155.08 557.71,155.11 557.20,155.16 556.68,155.24 556.17,155.34 555.65,155.47 555.13,155.62 554.62,155.81 554.11,156.02 553.61,156.26 553.11,156.53 552.63,156.83 552.15,157.15 551.69,157.51 551.24,157.89 550.81,158.30 550.40,158.74 550.01,159.21 549.64,159.70 549.30,160.22 548.99,160.76 548.70,161.32 548.45,161.90 548.23,162.50 548.04,163.12 547.89,163.75 547.78,164.40 547.70,165.06 547.67,165.72 547.67,166.38 547.72,167.05 547.81,167.72 547.94,168.38 548.11,169.04 548.33,169.69 548.58,170.32 548.87,170.94 549.21,171.54 549.58,172.12 549.99,172.67 550.43,173.20 550.90,173.70" fill="#b6c11c"/>
<polygon points="558.70,163.79 571.17,175.41 571.59,174.98 559.54,162.93" fill="#505050"/>
<polygon points="576.32,178.73 576.24,179.26 575.70,179.59 575.46,179.98 575.43,180.62 575.00,180.93 574.38,180.78 573.94,180.89 573.47,181.32 572.94,181.24 572.61,180.70 572.22,180.46 571.58,180.43 571.27,180.00 571.42,179.38 571.31,178.94 570.88,178.47 570.96,177.94 571.50,177.61 571.74,177.22 571.77,176.58 572.20,176.27 572.82,176.42 573.26,176.31 573.73,175.88 574.26,175.96 574.59,176.50 574.98,176.74 575.62,176.77 575.93,177.20 575.78,177.82 575.89,178.26" fill="#d2d2d2"/><circle cx="573.6" cy="178.6" r="0.96" fill="#fff"/>
<polygon points="579.28,175.32 583.20,175.32 583.20,176.52 582.56,176.52 582.56,178.76 583.68,179.96 581.76,179.96 581.60,181.72 581.20,181.72 581.04,179.96 579.04,179.96 580.00,178.76 580.00,176.52 579.28,176.52" fill="#d2d2d2"/>
<rect x="476.1" y="183.10" width="108.6" height="1.2" fill="#e6e6e6"/>
<text x="592.70" y="147.20" font-size="7.5" fill="#444" font-weight="normal" font-style="normal" text-anchor="start"  stroke="#444" stroke-width="0.06">Handles</text>
<text x="592.70" y="179.60" font-size="8.1" fill="#484848" font-weight="normal" font-style="normal" text-anchor="start" textLength="19.26" lengthAdjust="spacingAndGlyphs"  stroke="#484848" stroke-width="0.12">701 #</text>
<polygon points="661.96,175.44 661.39,174.85 660.86,174.23 660.37,173.58 659.90,172.91 659.47,172.21 659.08,171.49 658.73,170.75 658.42,170.00 658.15,169.23 657.91,168.44 657.72,167.65 657.57,166.84 657.47,166.03 657.40,165.22 657.38,164.40 657.40,163.58 657.47,162.77 657.57,161.96 657.72,161.15 657.91,160.36 658.15,159.57 658.42,158.80 658.73,158.05 659.08,157.31 659.47,156.59 659.90,155.89 660.37,155.22 660.86,154.57 661.39,153.95 661.96,153.36 662.55,152.79 663.17,152.26 663.82,151.77 664.49,151.30 665.19,150.87 665.91,150.48 666.65,150.13 667.40,149.82 668.17,149.55 668.96,149.31 669.75,149.12 670.56,148.97 671.37,148.87 672.18,148.80 673.00,148.78 673.82,148.80 674.63,148.87 675.44,148.97 676.25,149.12 677.04,149.31 677.83,149.55 678.60,149.82 679.35,150.13 680.09,150.48 680.81,150.87 681.51,151.30 682.18,151.77 682.83,152.26 683.45,152.79 684.04,153.36 684.61,153.95 685.14,154.57 685.63,155.22 686.10,155.89 686.53,156.59 686.92,157.31 687.27,158.05 687.58,158.80 687.85,159.57 688.09,160.36 688.28,161.15 688.43,161.96 688.53,162.77 688.60,163.58 688.62,164.40 688.60,165.22 688.53,166.03 688.43,166.84 688.28,167.65 688.09,168.44 687.85,169.23 687.58,170.00 687.27,170.75 686.92,171.49 686.53,172.21 686.10,172.91 685.63,173.58 685.14,174.23 684.61,174.85 684.04,175.44 680.47,171.87 680.76,171.39 681.03,170.90 681.27,170.41 681.48,169.91 681.66,169.40 681.82,168.89 681.95,168.38 682.05,167.87 682.13,167.37 682.18,166.86 682.21,166.36 682.22,165.86 682.20,165.37 682.17,164.88 682.11,164.40 682.03,163.93 681.93,163.46 681.81,163.00 681.68,162.56 681.52,162.12 681.35,161.69 681.16,161.27 680.95,160.86 680.73,160.46 680.49,160.07 680.24,159.70 679.97,159.33 679.69,158.98 679.40,158.64 679.09,158.31 678.76,158.00 678.43,157.70 678.08,157.41 677.72,157.14 677.34,156.88 676.96,156.64 676.56,156.41 676.15,156.20 675.73,156.00 675.30,155.82 674.86,155.66 674.41,155.52 673.95,155.39 673.48,155.29 673.00,155.20 672.51,155.14 672.02,155.10 671.52,155.08 671.02,155.08 670.51,155.11 670.00,155.16 669.48,155.24 668.97,155.34 668.45,155.47 667.93,155.62 667.42,155.81 666.91,156.02 666.41,156.26 665.91,156.53 665.43,156.83 664.95,157.15 664.49,157.51 664.04,157.89 663.61,158.30 663.20,158.74 662.81,159.21 662.44,159.70 662.10,160.22 661.79,160.76 661.50,161.32 661.25,161.90 661.03,162.50 660.84,163.12 660.69,163.75 660.58,164.40 660.50,165.06 660.47,165.72 660.47,166.38 660.52,167.05 660.61,167.72 660.74,168.38 660.91,169.04 661.13,169.69 661.38,170.32 661.67,170.94 662.01,171.54 662.38,172.12 662.79,172.67 663.23,173.20 663.70,173.70" fill="#b6c11c"/>
<line x1="685.95" y1="164.40" x2="690.09" y2="164.40" stroke="#fff" stroke-width="1.0"/>
<circle cx="691.13" cy="164.40" r="0.6" fill="#c8c8d8"/>
<polygon points="671.39,164.48 687.60,169.74 687.79,169.18 671.78,163.34" fill="#505050"/>
<polygon points="689.12,178.73 689.04,179.26 688.50,179.59 688.26,179.98 688.23,180.62 687.80,180.93 687.18,180.78 686.74,180.89 686.27,181.32 685.74,181.24 685.41,180.70 685.02,180.46 684.38,180.43 684.07,180.00 684.22,179.38 684.11,178.94 683.68,178.47 683.76,177.94 684.30,177.61 684.54,177.22 684.57,176.58 685.00,176.27 685.62,176.42 686.06,176.31 686.53,175.88 687.06,175.96 687.39,176.50 687.78,176.74 688.42,176.77 688.73,177.20 688.58,177.82 688.69,178.26" fill="#d2d2d2"/><circle cx="686.4" cy="178.6" r="0.96" fill="#fff"/>
<polygon points="692.08,175.32 696.00,175.32 696.00,176.52 695.36,176.52 695.36,178.76 696.48,179.96 694.56,179.96 694.40,181.72 694.00,181.72 693.84,179.96 691.84,179.96 692.80,178.76 692.80,176.52 692.08,176.52" fill="#d2d2d2"/>
<rect x="588.9" y="183.10" width="108.6" height="1.2" fill="#e6e6e6"/>
<text x="254.30" y="200.90" font-size="7.5" fill="#444" font-weight="normal" font-style="normal" text-anchor="start"  stroke="#444" stroke-width="0.06">Maintenance Days</text>
<text x="254.30" y="233.30" font-size="8.1" fill="#484848" font-weight="normal" font-style="normal" text-anchor="start" textLength="25.67" lengthAdjust="spacingAndGlyphs"  stroke="#484848" stroke-width="0.12">4.662 #</text>
<polygon points="323.56,229.14 323.30,228.88 323.05,228.61 322.80,228.34 322.57,228.06 324.47,226.48 324.67,226.72 324.87,226.95 325.09,227.18 325.30,227.40" fill="#f5c200"/>
<polygon points="322.57,228.06 322.06,227.41 321.59,226.74 321.15,226.05 320.76,225.33 320.40,224.59 320.07,223.84 319.79,223.07 319.55,222.29 319.35,221.49 319.20,220.69 319.08,219.87 319.01,219.06 318.98,218.24 319.00,217.42 319.05,216.60 319.15,215.79 319.30,214.98 319.48,214.18 319.71,213.40 319.97,212.62 320.28,211.86 320.63,211.12 321.01,210.40 321.44,209.69 321.90,209.02 322.39,208.36 322.92,207.73 323.48,207.14 324.07,206.57 324.69,206.03 325.33,205.53 326.01,205.06 326.70,204.63 327.42,204.23 328.16,203.87 328.91,203.55 329.68,203.28 330.47,203.04 331.26,202.84 332.07,202.69 332.88,202.58 333.70,202.51 334.52,202.48 335.34,202.50 336.15,202.56 336.97,202.66 337.77,202.81 338.57,203.00 339.36,203.22 340.13,203.49 340.89,203.80 341.63,204.15 342.35,204.54 343.05,204.97 343.73,205.43 344.38,205.93 345.01,206.46 345.60,207.02 346.17,207.61 346.70,208.23 347.21,208.88 347.67,209.55 348.10,210.25 348.50,210.97 348.85,211.71 349.17,212.46 349.44,213.24 349.68,214.02 349.87,214.82 350.02,215.62 350.13,216.44 350.19,217.25 350.22,218.07 350.20,218.89 350.13,219.71 350.03,220.52 349.88,221.33 349.69,222.12 349.46,222.91 349.19,223.68 348.87,224.44 348.52,225.18 348.13,225.90 347.70,226.60 347.24,227.28 346.74,227.93 346.21,228.55 345.64,229.14 342.07,225.57 342.36,225.09 342.63,224.60 342.87,224.10 343.08,223.60 343.26,223.09 343.42,222.59 343.55,222.07 343.65,221.56 343.73,221.06 343.78,220.55 343.81,220.05 343.82,219.55 343.80,219.05 343.77,218.57 343.71,218.08 343.63,217.61 343.53,217.14 343.41,216.69 343.27,216.24 343.11,215.80 342.94,215.37 342.75,214.95 342.54,214.54 342.32,214.14 342.08,213.75 341.83,213.38 341.56,213.01 341.27,212.66 340.98,212.32 340.66,211.99 340.34,211.68 340.00,211.38 339.65,211.09 339.29,210.82 338.91,210.56 338.52,210.32 338.12,210.09 337.71,209.88 337.29,209.68 336.86,209.51 336.42,209.35 335.96,209.20 335.50,209.08 335.03,208.98 334.55,208.90 334.06,208.83 333.57,208.79 333.07,208.78 332.56,208.78 332.05,208.81 331.54,208.87 331.02,208.95 330.50,209.05 329.99,209.19 329.47,209.35 328.96,209.53 328.45,209.75 327.94,209.99 327.45,210.27 326.96,210.57 326.49,210.90 326.02,211.26 325.58,211.65 325.15,212.06 324.74,212.51 324.35,212.98 323.99,213.48 323.65,214.00 323.34,214.54 323.06,215.11 322.81,215.70 322.59,216.30 322.41,216.93 322.27,217.56 322.16,218.21 322.09,218.87 322.07,219.53 322.08,220.20 322.13,220.87 322.23,221.54 322.37,222.21 322.55,222.86 322.77,223.51 323.03,224.14 323.34,224.76 323.68,225.35 324.06,225.93 324.47,226.48" fill="#b6c11c"/>
<polygon points="333.10,217.49 345.57,229.11 345.99,228.68 333.94,216.63" fill="#505050"/>
<polygon points="350.72,232.43 350.64,232.96 350.10,233.29 349.86,233.68 349.83,234.32 349.40,234.63 348.78,234.48 348.34,234.59 347.87,235.02 347.34,234.94 347.01,234.40 346.62,234.16 345.98,234.13 345.67,233.70 345.82,233.08 345.71,232.64 345.28,232.17 345.36,231.64 345.90,231.31 346.14,230.92 346.17,230.28 346.60,229.97 347.22,230.12 347.66,230.01 348.13,229.58 348.66,229.66 348.99,230.20 349.38,230.44 350.02,230.47 350.33,230.90 350.18,231.52 350.29,231.96" fill="#d2d2d2"/><circle cx="348.0" cy="232.3" r="0.96" fill="#fff"/>
<polygon points="353.68,229.02 357.60,229.02 357.60,230.22 356.96,230.22 356.96,232.46 358.08,233.66 356.16,233.66 356.00,235.42 355.60,235.42 355.44,233.66 353.44,233.66 354.40,232.46 354.40,230.22 353.68,230.22" fill="#d2d2d2"/>
<rect x="250.5" y="236.80" width="108.6" height="1.2" fill="#e6e6e6"/>
<text x="367.10" y="200.90" font-size="7.5" fill="#444" font-weight="normal" font-style="normal" text-anchor="start"  stroke="#444" stroke-width="0.06">Notifications in Send Queue</text>
<text x="367.10" y="233.30" font-size="8.1" fill="#484848" font-weight="normal" font-style="normal" text-anchor="start" textLength="10.70" lengthAdjust="spacingAndGlyphs"  stroke="#484848" stroke-width="0.12">0 #</text>
<polygon points="436.36,229.14 435.79,228.55 435.26,227.93 434.77,227.28 434.30,226.61 433.87,225.91 433.48,225.19 433.13,224.45 432.82,223.70 432.55,222.93 432.31,222.14 432.12,221.35 431.97,220.54 431.87,219.73 431.80,218.92 431.78,218.10 431.80,217.28 431.87,216.47 431.97,215.66 432.12,214.85 432.31,214.06 432.55,213.27 432.82,212.50 433.13,211.75 433.48,211.01 433.87,210.29 434.30,209.59 434.77,208.92 435.26,208.27 435.79,207.65 436.36,207.06 436.95,206.49 437.57,205.96 438.22,205.47 438.89,205.00 439.59,204.57 440.31,204.18 441.05,203.83 441.80,203.52 442.57,203.25 443.36,203.01 444.15,202.82 444.96,202.67 445.77,202.57 446.58,202.50 447.40,202.48 448.22,202.50 449.03,202.57 449.84,202.67 450.65,202.82 451.44,203.01 452.23,203.25 453.00,203.52 453.75,203.83 454.49,204.18 455.21,204.57 455.91,205.00 456.58,205.47 457.23,205.96 457.85,206.49 458.44,207.06 459.01,207.65 459.54,208.27 460.03,208.92 460.50,209.59 460.93,210.29 461.32,211.01 461.67,211.75 461.98,212.50 462.25,213.27 462.49,214.06 462.68,214.85 462.83,215.66 462.93,216.47 463.00,217.28 463.02,218.10 463.00,218.92 462.93,219.73 462.83,220.54 462.68,221.35 462.49,222.14 462.25,222.93 461.98,223.70 461.67,224.45 461.32,225.19 460.93,225.91 460.50,226.61 460.03,227.28 459.54,227.93 459.01,228.55 458.44,229.14 454.87,225.57 455.16,225.09 455.43,224.60 455.67,224.11 455.88,223.61 456.06,223.10 456.22,222.59 456.35,222.08 456.45,221.57 456.53,221.07 456.58,220.56 456.61,220.06 456.62,219.56 456.60,219.07 456.57,218.58 456.51,218.10 456.43,217.63 456.33,217.16 456.21,216.70 456.08,216.26 455.92,215.82 455.75,215.39 455.56,214.97 455.35,214.56 455.13,214.16 454.89,213.77 454.64,213.40 454.37,213.03 454.09,212.68 453.80,212.34 453.49,212.01 453.16,211.70 452.83,211.40 452.48,211.11 452.12,210.84 451.74,210.58 451.36,210.34 450.96,210.11 450.55,209.90 450.13,209.70 449.70,209.52 449.26,209.36 448.81,209.22 448.35,209.09 447.88,208.99 447.40,208.90 446.91,208.84 446.42,208.80 445.92,208.78 445.42,208.78 444.91,208.81 444.40,208.86 443.88,208.94 443.37,209.04 442.85,209.17 442.33,209.32 441.82,209.51 441.31,209.72 440.81,209.96 440.31,210.23 439.83,210.53 439.35,210.85 438.89,211.21 438.44,211.59 438.01,212.00 437.60,212.44 437.21,212.91 436.84,213.40 436.50,213.92 436.19,214.46 435.90,215.02 435.65,215.60 435.43,216.20 435.24,216.82 435.09,217.45 434.98,218.10 434.90,218.76 434.87,219.42 434.87,220.08 434.92,220.75 435.01,221.42 435.14,222.08 435.31,222.74 435.53,223.39 435.78,224.02 436.07,224.64 436.41,225.24 436.78,225.82 437.19,226.37 437.63,226.90 438.10,227.40" fill="#b6c11c"/>
<polygon points="448.04,216.62 436.20,228.88 436.62,229.30 448.88,217.46" fill="#505050"/>
<polygon points="463.52,232.43 463.44,232.96 462.90,233.29 462.66,233.68 462.63,234.32 462.20,234.63 461.58,234.48 461.14,234.59 460.67,235.02 460.14,234.94 459.81,234.40 459.42,234.16 458.78,234.13 458.47,233.70 458.62,233.08 458.51,232.64 458.08,232.17 458.16,231.64 458.70,231.31 458.94,230.92 458.97,230.28 459.40,229.97 460.02,230.12 460.46,230.01 460.93,229.58 461.46,229.66 461.79,230.20 462.18,230.44 462.82,230.47 463.13,230.90 462.98,231.52 463.09,231.96" fill="#d2d2d2"/><circle cx="460.8" cy="232.3" r="0.96" fill="#fff"/>
<polygon points="466.48,229.02 470.40,229.02 470.40,230.22 469.76,230.22 469.76,232.46 470.88,233.66 468.96,233.66 468.80,235.42 468.40,235.42 468.24,233.66 466.24,233.66 467.20,232.46 467.20,230.22 466.48,230.22" fill="#d2d2d2"/>
<rect x="363.3" y="236.80" width="108.6" height="1.2" fill="#e6e6e6"/>
<text x="479.90" y="200.90" font-size="7.5" fill="#444" font-weight="normal" font-style="normal" text-anchor="start"  stroke="#444" stroke-width="0.06">Number of State Objects</text>
<text x="479.90" y="233.30" font-size="8.1" fill="#484848" font-weight="normal" font-style="normal" text-anchor="start" textLength="10.70" lengthAdjust="spacingAndGlyphs"  stroke="#484848" stroke-width="0.12">1 #</text>
<polygon points="549.16,229.14 548.59,228.55 548.06,227.93 547.57,227.28 547.10,226.61 546.67,225.91 546.28,225.19 545.93,224.45 545.62,223.70 545.35,222.93 545.11,222.14 544.92,221.35 544.77,220.54 544.67,219.73 544.60,218.92 544.58,218.10 544.60,217.28 544.67,216.47 544.77,215.66 544.92,214.85 545.11,214.06 545.35,213.27 545.62,212.50 545.93,211.75 546.28,211.01 546.67,210.29 547.10,209.59 547.57,208.92 548.06,208.27 548.59,207.65 549.16,207.06 549.75,206.49 550.37,205.96 551.02,205.47 551.69,205.00 552.39,204.57 553.11,204.18 553.85,203.83 554.60,203.52 555.37,203.25 556.16,203.01 556.95,202.82 557.76,202.67 558.57,202.57 559.38,202.50 560.20,202.48 561.02,202.50 561.83,202.57 562.64,202.67 563.45,202.82 564.24,203.01 565.03,203.25 565.80,203.52 566.55,203.83 567.29,204.18 568.01,204.57 568.71,205.00 569.38,205.47 570.03,205.96 570.65,206.49 571.24,207.06 571.81,207.65 572.34,208.27 572.83,208.92 573.30,209.59 573.73,210.29 574.12,211.01 574.47,211.75 574.78,212.50 575.05,213.27 575.29,214.06 575.48,214.85 575.63,215.66 575.73,216.47 575.80,217.28 575.82,218.10 575.80,218.92 575.73,219.73 575.63,220.54 575.48,221.35 575.29,222.14 575.05,222.93 574.78,223.70 574.47,224.45 574.12,225.19 573.73,225.91 573.30,226.61 572.83,227.28 572.34,227.93 571.81,228.55 571.24,229.14 567.67,225.57 567.96,225.09 568.23,224.60 568.47,224.11 568.68,223.61 568.86,223.10 569.02,222.59 569.15,222.08 569.25,221.57 569.33,221.07 569.38,220.56 569.41,220.06 569.42,219.56 569.40,219.07 569.37,218.58 569.31,218.10 569.23,217.63 569.13,217.16 569.01,216.70 568.88,216.26 568.72,215.82 568.55,215.39 568.36,214.97 568.15,214.56 567.93,214.16 567.69,213.77 567.44,213.40 567.17,213.03 566.89,212.68 566.60,212.34 566.29,212.01 565.96,211.70 565.63,211.40 565.28,211.11 564.92,210.84 564.54,210.58 564.16,210.34 563.76,210.11 563.35,209.90 562.93,209.70 562.50,209.52 562.06,209.36 561.61,209.22 561.15,209.09 560.68,208.99 560.20,208.90 559.71,208.84 559.22,208.80 558.72,208.78 558.22,208.78 557.71,208.81 557.20,208.86 556.68,208.94 556.17,209.04 555.65,209.17 555.13,209.32 554.62,209.51 554.11,209.72 553.61,209.96 553.11,210.23 552.63,210.53 552.15,210.85 551.69,211.21 551.24,211.59 550.81,212.00 550.40,212.44 550.01,212.91 549.64,213.40 549.30,213.92 548.99,214.46 548.70,215.02 548.45,215.60 548.23,216.20 548.04,216.82 547.89,217.45 547.78,218.10 547.70,218.76 547.67,219.42 547.67,220.08 547.72,220.75 547.81,221.42 547.94,222.08 548.11,222.74 548.33,223.39 548.58,224.02 548.87,224.64 549.21,225.24 549.58,225.82 549.99,226.37 550.43,226.90 550.90,227.40" fill="#b6c11c"/>
<line x1="569.36" y1="208.94" x2="572.29" y2="206.01" stroke="#fff" stroke-width="1.0"/>
<circle cx="573.02" cy="205.28" r="0.6" fill="#c8c8d8"/>
<polygon points="558.70,217.49 571.17,229.11 571.59,228.68 559.54,216.63" fill="#505050"/>
<polygon points="576.32,232.43 576.24,232.96 575.70,233.29 575.46,233.68 575.43,234.32 575.00,234.63 574.38,234.48 573.94,234.59 573.47,235.02 572.94,234.94 572.61,234.40 572.22,234.16 571.58,234.13 571.27,233.70 571.42,233.08 571.31,232.64 570.88,232.17 570.96,231.64 571.50,231.31 571.74,230.92 571.77,230.28 572.20,229.97 572.82,230.12 573.26,230.01 573.73,229.58 574.26,229.66 574.59,230.20 574.98,230.44 575.62,230.47 575.93,230.90 575.78,231.52 575.89,231.96" fill="#d2d2d2"/><circle cx="573.6" cy="232.3" r="0.96" fill="#fff"/>
<polygon points="579.28,229.02 583.20,229.02 583.20,230.22 582.56,230.22 582.56,232.46 583.68,233.66 581.76,233.66 581.60,235.42 581.20,235.42 581.04,233.66 579.04,233.66 580.00,232.46 580.00,230.22 579.28,230.22" fill="#d2d2d2"/>
<rect x="476.1" y="236.80" width="108.6" height="1.2" fill="#e6e6e6"/>
<text x="592.70" y="200.90" font-size="7.5" fill="#444" font-weight="normal" font-style="normal" text-anchor="start"  stroke="#444" stroke-width="0.06">Probe Messages per Second</text>
<text x="592.70" y="233.30" font-size="8.1" fill="#484848" font-weight="normal" font-style="normal" text-anchor="start" textLength="26.94" lengthAdjust="spacingAndGlyphs"  stroke="#484848" stroke-width="0.12">3 Msg/s</text>
<polygon points="661.96,229.14 661.39,228.55 660.86,227.93 660.37,227.28 659.90,226.61 659.47,225.91 659.08,225.19 658.73,224.45 658.42,223.70 658.15,222.93 657.91,222.14 657.72,221.35 657.57,220.54 657.47,219.73 657.40,218.92 657.38,218.10 657.40,217.28 657.47,216.47 657.57,215.66 657.72,214.85 657.91,214.06 658.15,213.27 658.42,212.50 658.73,211.75 659.08,211.01 659.47,210.29 659.90,209.59 660.37,208.92 660.86,208.27 661.39,207.65 661.96,207.06 662.55,206.49 663.17,205.96 663.82,205.47 664.49,205.00 665.19,204.57 665.91,204.18 666.65,203.83 667.40,203.52 668.17,203.25 668.96,203.01 669.75,202.82 670.56,202.67 671.37,202.57 672.18,202.50 673.00,202.48 673.82,202.50 674.63,202.57 675.44,202.67 676.25,202.82 677.04,203.01 677.83,203.25 678.60,203.52 679.35,203.83 680.09,204.18 680.81,204.57 681.51,205.00 682.18,205.47 682.83,205.96 683.45,206.49 684.04,207.06 684.61,207.65 685.14,208.27 685.63,208.92 686.10,209.59 686.53,210.29 686.92,211.01 687.27,211.75 687.58,212.50 687.85,213.27 688.09,214.06 688.28,214.85 688.43,215.66 688.53,216.47 688.60,217.28 688.62,218.10 688.60,218.92 688.53,219.73 688.43,220.54 688.28,221.35 688.09,222.14 687.85,222.93 687.58,223.70 687.27,224.45 686.92,225.19 686.53,225.91 686.10,226.61 685.63,227.28 685.14,227.93 684.61,228.55 684.04,229.14 680.47,225.57 680.76,225.09 681.03,224.60 681.27,224.11 681.48,223.61 681.66,223.10 681.82,222.59 681.95,222.08 682.05,221.57 682.13,221.07 682.18,220.56 682.21,220.06 682.22,219.56 682.20,219.07 682.17,218.58 682.11,218.10 682.03,217.63 681.93,217.16 681.81,216.70 681.68,216.26 681.52,215.82 681.35,215.39 681.16,214.97 680.95,214.56 680.73,214.16 680.49,213.77 680.24,213.40 679.97,213.03 679.69,212.68 679.40,212.34 679.09,212.01 678.76,211.70 678.43,211.40 678.08,211.11 677.72,210.84 677.34,210.58 676.96,210.34 676.56,210.11 676.15,209.90 675.73,209.70 675.30,209.52 674.86,209.36 674.41,209.22 673.95,209.09 673.48,208.99 673.00,208.90 672.51,208.84 672.02,208.80 671.52,208.78 671.02,208.78 670.51,208.81 670.00,208.86 669.48,208.94 668.97,209.04 668.45,209.17 667.93,209.32 667.42,209.51 666.91,209.72 666.41,209.96 665.91,210.23 665.43,210.53 664.95,210.85 664.49,211.21 664.04,211.59 663.61,212.00 663.20,212.44 662.81,212.91 662.44,213.40 662.10,213.92 661.79,214.46 661.50,215.02 661.25,215.60 661.03,216.20 660.84,216.82 660.69,217.45 660.58,218.10 660.50,218.76 660.47,219.42 660.47,220.08 660.52,220.75 660.61,221.42 660.74,222.08 660.91,222.74 661.13,223.39 661.38,224.02 661.67,224.64 662.01,225.24 662.38,225.82 662.79,226.37 663.23,226.90 663.70,227.40" fill="#b6c11c"/>
<line x1="661.78" y1="211.62" x2="658.20" y2="209.55" stroke="#fff" stroke-width="1.0"/>
<circle cx="657.30" cy="209.03" r="0.6" fill="#c8c8d8"/>
<polygon points="674.03,219.34 668.48,203.23 667.91,203.41 672.89,219.71" fill="#505050"/>
<polygon points="689.12,232.43 689.04,232.96 688.50,233.29 688.26,233.68 688.23,234.32 687.80,234.63 687.18,234.48 686.74,234.59 686.27,235.02 685.74,234.94 685.41,234.40 685.02,234.16 684.38,234.13 684.07,233.70 684.22,233.08 684.11,232.64 683.68,232.17 683.76,231.64 684.30,231.31 684.54,230.92 684.57,230.28 685.00,229.97 685.62,230.12 686.06,230.01 686.53,229.58 687.06,229.66 687.39,230.20 687.78,230.44 688.42,230.47 688.73,230.90 688.58,231.52 688.69,231.96" fill="#d2d2d2"/><circle cx="686.4" cy="232.3" r="0.96" fill="#fff"/>
<polygon points="692.08,229.02 696.00,229.02 696.00,230.22 695.36,230.22 695.36,232.46 696.48,233.66 694.56,233.66 694.40,235.42 694.00,235.42 693.84,233.66 691.84,233.66 692.80,232.46 692.80,230.22 692.08,230.22" fill="#d2d2d2"/>
<rect x="588.9" y="236.80" width="108.6" height="1.2" fill="#e6e6e6"/>
<text x="28.70" y="254.60" font-size="7.5" fill="#444" font-weight="normal" font-style="normal" text-anchor="start"  stroke="#444" stroke-width="0.06">Raw Data Buffer</text>
<text x="28.70" y="287.00" font-size="8.1" fill="#484848" font-weight="normal" font-style="normal" text-anchor="start" textLength="10.70" lengthAdjust="spacingAndGlyphs"  stroke="#484848" stroke-width="0.12">0 #</text>
<polygon points="97.96,282.84 97.39,282.25 96.86,281.63 96.37,280.98 95.90,280.31 95.47,279.61 95.08,278.89 94.73,278.15 94.42,277.40 94.15,276.63 93.91,275.84 93.72,275.05 93.57,274.24 93.47,273.43 93.40,272.62 93.38,271.80 93.40,270.98 93.47,270.17 93.57,269.36 93.72,268.55 93.91,267.76 94.15,266.97 94.42,266.20 94.73,265.45 95.08,264.71 95.47,263.99 95.90,263.29 96.37,262.62 96.86,261.97 97.39,261.35 97.96,260.76 98.55,260.19 99.17,259.66 99.82,259.17 100.49,258.70 101.19,258.27 101.91,257.88 102.65,257.53 103.40,257.22 104.17,256.95 104.96,256.71 105.75,256.52 106.56,256.37 107.37,256.27 108.18,256.20 109.00,256.18 109.82,256.20 110.63,256.27 111.44,256.37 112.25,256.52 113.04,256.71 113.83,256.95 114.60,257.22 115.35,257.53 116.09,257.88 116.81,258.27 117.51,258.70 118.18,259.17 118.83,259.66 119.45,260.19 120.04,260.76 120.61,261.35 121.14,261.97 121.63,262.62 122.10,263.29 122.53,263.99 122.92,264.71 123.27,265.45 123.58,266.20 123.85,266.97 124.09,267.76 124.28,268.55 124.43,269.36 124.53,270.17 124.60,270.98 124.62,271.80 124.60,272.62 124.53,273.43 124.43,274.24 124.28,275.05 124.09,275.84 123.85,276.63 123.58,277.40 123.27,278.15 122.92,278.89 122.53,279.61 122.10,280.31 121.63,280.98 121.14,281.63 120.61,282.25 120.04,282.84 116.47,279.27 116.76,278.79 117.03,278.30 117.27,277.81 117.48,277.31 117.66,276.80 117.82,276.29 117.95,275.78 118.05,275.27 118.13,274.77 118.18,274.26 118.21,273.76 118.22,273.26 118.20,272.77 118.17,272.28 118.11,271.80 118.03,271.33 117.93,270.86 117.81,270.40 117.68,269.96 117.52,269.52 117.35,269.09 117.16,268.67 116.95,268.26 116.73,267.86 116.49,267.47 116.24,267.10 115.97,266.73 115.69,266.38 115.40,266.04 115.09,265.71 114.76,265.40 114.43,265.10 114.08,264.81 113.72,264.54 113.34,264.28 112.96,264.04 112.56,263.81 112.15,263.60 111.73,263.40 111.30,263.22 110.86,263.06 110.41,262.92 109.95,262.79 109.48,262.69 109.00,262.60 108.51,262.54 108.02,262.50 107.52,262.48 107.02,262.48 106.51,262.51 106.00,262.56 105.48,262.64 104.97,262.74 104.45,262.87 103.93,263.02 103.42,263.21 102.91,263.42 102.41,263.66 101.91,263.93 101.43,264.23 100.95,264.55 100.49,264.91 100.04,265.29 99.61,265.70 99.20,266.14 98.81,266.61 98.44,267.10 98.10,267.62 97.79,268.16 97.50,268.72 97.25,269.30 97.03,269.90 96.84,270.52 96.69,271.15 96.58,271.80 96.50,272.46 96.47,273.12 96.47,273.78 96.52,274.45 96.61,275.12 96.74,275.78 96.91,276.44 97.13,277.09 97.38,277.72 97.67,278.34 98.01,278.94 98.38,279.52 98.79,280.07 99.23,280.60 99.70,281.10" fill="#b6c11c"/>
<polygon points="109.64,270.32 97.80,282.58 98.22,283.00 110.48,271.16" fill="#505050"/>
<polygon points="125.12,286.13 125.04,286.66 124.50,286.99 124.26,287.38 124.23,288.02 123.80,288.33 123.18,288.18 122.74,288.29 122.27,288.72 121.74,288.64 121.41,288.10 121.02,287.86 120.38,287.83 120.07,287.40 120.22,286.78 120.11,286.34 119.68,285.87 119.76,285.34 120.30,285.01 120.54,284.62 120.57,283.98 121.00,283.67 121.62,283.82 122.06,283.71 122.53,283.28 123.06,283.36 123.39,283.90 123.78,284.14 124.42,284.17 124.73,284.60 124.58,285.22 124.69,285.66" fill="#d2d2d2"/><circle cx="122.4" cy="286.0" r="0.96" fill="#fff"/>
<polygon points="128.08,282.72 132.00,282.72 132.00,283.92 131.36,283.92 131.36,286.16 132.48,287.36 130.56,287.36 130.40,289.12 130.00,289.12 129.84,287.36 127.84,287.36 128.80,286.16 128.80,283.92 128.08,283.92" fill="#d2d2d2"/>
<rect x="24.9" y="290.50" width="108.6" height="1.2" fill="#e6e6e6"/>
<text x="141.50" y="254.60" font-size="7.5" fill="#444" font-weight="normal" font-style="normal" text-anchor="start"  stroke="#444" stroke-width="0.06">Threads</text>
<text x="141.50" y="287.00" font-size="8.1" fill="#484848" font-weight="normal" font-style="normal" text-anchor="start" textLength="14.98" lengthAdjust="spacingAndGlyphs"  stroke="#484848" stroke-width="0.12">77 #</text>
<polygon points="210.76,282.84 210.19,282.25 209.66,281.63 209.17,280.98 208.70,280.31 208.27,279.61 207.88,278.89 207.53,278.15 207.22,277.40 206.95,276.63 206.71,275.84 206.52,275.05 206.37,274.24 206.27,273.43 206.20,272.62 206.18,271.80 206.20,270.98 206.27,270.17 206.37,269.36 206.52,268.55 206.71,267.76 206.95,266.97 207.22,266.20 207.53,265.45 207.88,264.71 208.27,263.99 208.70,263.29 209.17,262.62 209.66,261.97 210.19,261.35 210.76,260.76 211.35,260.19 211.97,259.66 212.62,259.17 213.29,258.70 213.99,258.27 214.71,257.88 215.45,257.53 216.20,257.22 216.97,256.95 217.76,256.71 218.55,256.52 219.36,256.37 220.17,256.27 220.98,256.20 221.80,256.18 222.62,256.20 223.43,256.27 224.24,256.37 225.05,256.52 225.84,256.71 226.63,256.95 227.40,257.22 228.15,257.53 228.89,257.88 229.61,258.27 230.31,258.70 230.98,259.17 231.63,259.66 232.25,260.19 232.84,260.76 233.41,261.35 233.94,261.97 234.43,262.62 234.90,263.29 235.33,263.99 235.72,264.71 236.07,265.45 236.38,266.20 236.65,266.97 236.89,267.76 237.08,268.55 237.23,269.36 237.33,270.17 237.40,270.98 237.42,271.80 237.40,272.62 237.33,273.43 237.23,274.24 237.08,275.05 236.89,275.84 236.65,276.63 236.38,277.40 236.07,278.15 235.72,278.89 235.33,279.61 234.90,280.31 234.43,280.98 233.94,281.63 233.41,282.25 232.84,282.84 229.27,279.27 229.56,278.79 229.83,278.30 230.07,277.81 230.28,277.31 230.46,276.80 230.62,276.29 230.75,275.78 230.85,275.27 230.93,274.77 230.98,274.26 231.01,273.76 231.02,273.26 231.00,272.77 230.97,272.28 230.91,271.80 230.83,271.33 230.73,270.86 230.61,270.40 230.48,269.96 230.32,269.52 230.15,269.09 229.96,268.67 229.75,268.26 229.53,267.86 229.29,267.47 229.04,267.10 228.77,266.73 228.49,266.38 228.20,266.04 227.89,265.71 227.56,265.40 227.23,265.10 226.88,264.81 226.52,264.54 226.14,264.28 225.76,264.04 225.36,263.81 224.95,263.60 224.53,263.40 224.10,263.22 223.66,263.06 223.21,262.92 222.75,262.79 222.28,262.69 221.80,262.60 221.31,262.54 220.82,262.50 220.32,262.48 219.82,262.48 219.31,262.51 218.80,262.56 218.28,262.64 217.77,262.74 217.25,262.87 216.73,263.02 216.22,263.21 215.71,263.42 215.21,263.66 214.71,263.93 214.23,264.23 213.75,264.55 213.29,264.91 212.84,265.29 212.41,265.70 212.00,266.14 211.61,266.61 211.24,267.10 210.90,267.62 210.59,268.16 210.30,268.72 210.05,269.30 209.83,269.90 209.64,270.52 209.49,271.15 209.38,271.80 209.30,272.46 209.27,273.12 209.27,273.78 209.32,274.45 209.41,275.12 209.54,275.78 209.71,276.44 209.93,277.09 210.18,277.72 210.47,278.34 210.81,278.94 211.18,279.52 211.59,280.07 212.03,280.60 212.50,281.10" fill="#b6c11c"/>
<line x1="234.42" y1="274.71" x2="238.46" y2="275.65" stroke="#fff" stroke-width="1.0"/>
<circle cx="239.47" cy="275.88" r="0.6" fill="#c8c8d8"/>
<polygon points="220.23,272.20 237.17,274.13 237.25,273.53 220.39,271.01" fill="#505050"/>
<polygon points="237.92,286.13 237.84,286.66 237.30,286.99 237.06,287.38 237.03,288.02 236.60,288.33 235.98,288.18 235.54,288.29 235.07,288.72 234.54,288.64 234.21,288.10 233.82,287.86 233.18,287.83 232.87,287.40 233.02,286.78 232.91,286.34 232.48,285.87 232.56,285.34 233.10,285.01 233.34,284.62 233.37,283.98 233.80,283.67 234.42,283.82 234.86,283.71 235.33,283.28 235.86,283.36 236.19,283.90 236.58,284.14 237.22,284.17 237.53,284.60 237.38,285.22 237.49,285.66" fill="#d2d2d2"/><circle cx="235.2" cy="286.0" r="0.96" fill="#fff"/>
<polygon points="240.88,282.72 244.80,282.72 244.80,283.92 244.16,283.92 244.16,286.16 245.28,287.36 243.36,287.36 243.20,289.12 242.80,289.12 242.64,287.36 240.64,287.36 241.60,286.16 241.60,283.92 240.88,283.92" fill="#d2d2d2"/>
<rect x="137.7" y="290.50" width="108.6" height="1.2" fill="#e6e6e6"/>
<text x="43.60" y="348.70" font-size="9.8" fill="#2d3249" font-weight="bold" font-style="normal" text-anchor="start" textLength="34.10" lengthAdjust="spacingAndGlyphs" >Channel</text>
<path d="M82.6,345.2 H87.6 L85.1,347.9 Z" fill="#2b3047"/>
<text x="196.50" y="348.70" font-size="9.8" fill="#2d3249" font-weight="bold" font-style="normal" text-anchor="start" textLength="9.00" lengthAdjust="spacingAndGlyphs" >ID</text>
<path d="M209.3,344.3 L212.1,341.2 L214.9,344.3 Z M209.3,344.9 L212.1,348.0 L214.9,344.9 Z" fill="#cdcdcd"/>
<text x="233.00" y="348.70" font-size="9.8" fill="#2d3249" font-weight="bold" font-style="normal" text-anchor="start" textLength="44.00" lengthAdjust="spacingAndGlyphs" >Last Value</text>
<path d="M281.5,344.3 L284.3,341.2 L287.09999999999997,344.3 Z M281.5,344.9 L284.3,348.0 L287.09999999999997,344.9 Z" fill="#cdcdcd"/>
<text x="421.50" y="348.70" font-size="9.8" fill="#2d3249" font-weight="bold" font-style="normal" text-anchor="start" textLength="40.00" lengthAdjust="spacingAndGlyphs" >Minimum</text>
<path d="M466.3,344.3 L469.1,341.2 L471.9,344.3 Z M466.3,344.9 L469.1,348.0 L471.9,344.9 Z" fill="#cdcdcd"/>
<text x="604.00" y="348.70" font-size="9.8" fill="#2d3249" font-weight="bold" font-style="normal" text-anchor="start" textLength="41.50" lengthAdjust="spacingAndGlyphs" >Maximum</text>
<path d="M649.8,344.3 L652.6,341.2 L655.4,344.3 Z M649.8,344.9 L652.6,348.0 L655.4,344.9 Z" fill="#cdcdcd"/>
<rect x="36" y="353" width="702" height="1" fill="#ebebeb"/>
<text x="43.60" y="373.10" font-size="9.4" fill="#4d4d4d" font-weight="normal" font-style="normal" text-anchor="start" textLength="52.26" lengthAdjust="spacingAndGlyphs" >Age of Code</text>
<text x="216.50" y="373.10" font-size="9.4" fill="#4d4d4d" font-weight="normal" font-style="normal" text-anchor="end" textLength="10.46" lengthAdjust="spacingAndGlyphs" >10</text>
<text x="232.20" y="373.10" font-size="9.4" fill="#4d4d4d" font-weight="normal" font-style="normal" text-anchor="start" textLength="54.40" lengthAdjust="spacingAndGlyphs" >5 d 20 h 49 …</text>
<text x="473.00" y="373.10" font-size="9.4" fill="#4d4d4d" font-weight="normal" font-style="normal" text-anchor="end" textLength="36.58" lengthAdjust="spacingAndGlyphs" >5 h 21 m</text>
<text x="657.50" y="373.10" font-size="9.4" fill="#4d4d4d" font-weight="normal" font-style="normal" text-anchor="end" textLength="18.30" lengthAdjust="spacingAndGlyphs" >22 d</text>
<circle cx="713.10" cy="366.70" r="2.35" fill="none" stroke="#3c3c3c" stroke-width="1.35"/>
<circle cx="708.80" cy="370.80" r="1.3" fill="none" stroke="#444" stroke-width="1.15"/>
<rect x="36" y="377.10" width="702" height="1" fill="#ebebeb"/>
<text x="43.60" y="397.15" font-size="9.4" fill="#4d4d4d" font-weight="normal" font-style="normal" text-anchor="start" textLength="82.00" lengthAdjust="spacingAndGlyphs" >Committed Memory</text>
<text x="216.50" y="397.15" font-size="9.4" fill="#4d4d4d" font-weight="normal" font-style="normal" text-anchor="end" textLength="5.23" lengthAdjust="spacingAndGlyphs" >4</text>
<text x="289.20" y="397.15" font-size="9.4" fill="#4d4d4d" font-weight="normal" font-style="normal" text-anchor="end" textLength="32.40" lengthAdjust="spacingAndGlyphs" >567 MB</text>
<text x="473.00" y="397.15" font-size="9.4" fill="#4d4d4d" font-weight="normal" font-style="normal" text-anchor="end" textLength="32.40" lengthAdjust="spacingAndGlyphs" >103 MB</text>
<text x="657.50" y="397.15" font-size="9.4" fill="#4d4d4d" font-weight="normal" font-style="normal" text-anchor="end" textLength="32.40" lengthAdjust="spacingAndGlyphs" >777 MB</text>
<circle cx="713.10" cy="390.75" r="2.35" fill="none" stroke="#3c3c3c" stroke-width="1.35"/>
<circle cx="708.80" cy="394.85" r="1.3" fill="none" stroke="#444" stroke-width="1.15"/>
<rect x="36" y="401.15" width="702" height="1" fill="#ebebeb"/>
<text x="43.60" y="421.20" font-size="9.4" fill="#4d4d4d" font-weight="normal" font-style="normal" text-anchor="start" textLength="105.56" lengthAdjust="spacingAndGlyphs" >Configuration Last Saved</text>
<text x="216.50" y="421.20" font-size="9.4" fill="#4d4d4d" font-weight="normal" font-style="normal" text-anchor="end" textLength="9.76" lengthAdjust="spacingAndGlyphs" >11</text>
<text x="289.20" y="421.20" font-size="9.4" fill="#4d4d4d" font-weight="normal" font-style="normal" text-anchor="end" textLength="36.05" lengthAdjust="spacingAndGlyphs" >8 m 36 s</text>
<text x="473.00" y="421.20" font-size="9.4" fill="#4d4d4d" font-weight="normal" font-style="normal" text-anchor="end" textLength="12.54" lengthAdjust="spacingAndGlyphs" >4 s</text>
<text x="657.50" y="421.20" font-size="9.4" fill="#4d4d4d" font-weight="normal" font-style="normal" text-anchor="end" textLength="31.35" lengthAdjust="spacingAndGlyphs" >9 h 4 m</text>
<circle cx="713.10" cy="414.80" r="2.35" fill="none" stroke="#3c3c3c" stroke-width="1.35"/>
<circle cx="708.80" cy="418.90" r="1.3" fill="none" stroke="#444" stroke-width="1.15"/>
<rect x="36" y="425.20" width="702" height="1" fill="#ebebeb"/>
<text x="43.60" y="445.25" font-size="9.4" fill="#4d4d4d" font-weight="normal" font-style="normal" text-anchor="start" textLength="43.37" lengthAdjust="spacingAndGlyphs" >CPU Load</text>
<text x="216.50" y="445.25" font-size="9.4" fill="#4d4d4d" font-weight="normal" font-style="normal" text-anchor="end" textLength="5.23" lengthAdjust="spacingAndGlyphs" >5</text>
<text x="289.20" y="445.25" font-size="9.4" fill="#4d4d4d" font-weight="normal" font-style="normal" text-anchor="end" textLength="16.20" lengthAdjust="spacingAndGlyphs" >4 %</text>
<text x="473.00" y="445.25" font-size="9.4" fill="#4d4d4d" font-weight="normal" font-style="normal" text-anchor="end" textLength="16.20" lengthAdjust="spacingAndGlyphs" >0 %</text>
<text x="657.50" y="445.25" font-size="9.4" fill="#4d4d4d" font-weight="normal" font-style="normal" text-anchor="end" textLength="16.20" lengthAdjust="spacingAndGlyphs" >5 %</text>
<circle cx="713.10" cy="438.85" r="2.35" fill="none" stroke="#3c3c3c" stroke-width="1.35"/>
<circle cx="708.80" cy="442.95" r="1.3" fill="none" stroke="#444" stroke-width="1.15"/>
<rect x="36" y="449.25" width="702" height="1" fill="#ebebeb"/>
<text x="43.60" y="469.30" font-size="9.4" fill="#4d4d4d" font-weight="normal" font-style="normal" text-anchor="start" textLength="41.79" lengthAdjust="spacingAndGlyphs" >Downtime</text>
<text x="216.50" y="469.30" font-size="9.4" fill="#4d4d4d" font-weight="normal" font-style="normal" text-anchor="end" textLength="8.36" lengthAdjust="spacingAndGlyphs" >-4</text>
<circle cx="713.10" cy="462.90" r="2.35" fill="none" stroke="#3c3c3c" stroke-width="1.35"/>
<circle cx="708.80" cy="467.00" r="1.3" fill="none" stroke="#444" stroke-width="1.15"/>
<rect x="36" y="473.30" width="702" height="1" fill="#ebebeb"/>
<text x="43.60" y="493.35" font-size="9.4" fill="#4d4d4d" font-weight="normal" font-style="normal" text-anchor="start" textLength="98.21" lengthAdjust="spacingAndGlyphs" >Free Page File Memory</text>
<text x="216.50" y="493.35" font-size="9.4" fill="#4d4d4d" font-weight="normal" font-style="normal" text-anchor="end" textLength="5.23" lengthAdjust="spacingAndGlyphs" >2</text>
<text x="289.20" y="493.35" font-size="9.4" fill="#4d4d4d" font-weight="normal" font-style="normal" text-anchor="end" textLength="40.24" lengthAdjust="spacingAndGlyphs" >6.558 MB</text>
<text x="473.00" y="493.35" font-size="9.4" fill="#4d4d4d" font-weight="normal" font-style="normal" text-anchor="end" textLength="40.24" lengthAdjust="spacingAndGlyphs" >2.235 MB</text>
<text x="657.50" y="493.35" font-size="9.4" fill="#4d4d4d" font-weight="normal" font-style="normal" text-anchor="end" textLength="44.77" lengthAdjust="spacingAndGlyphs" >11.689 MB</text>
<circle cx="713.10" cy="486.95" r="2.35" fill="none" stroke="#3c3c3c" stroke-width="1.35"/>
<circle cx="708.80" cy="491.05" r="1.3" fill="none" stroke="#444" stroke-width="1.15"/>
<rect x="36" y="497.35" width="702" height="1" fill="#ebebeb"/>
<text x="43.60" y="517.40" font-size="9.4" fill="#4d4d4d" font-weight="normal" font-style="normal" text-anchor="start" textLength="93.50" lengthAdjust="spacingAndGlyphs" >Free Physical Memory</text>
<text x="216.50" y="517.40" font-size="9.4" fill="#4d4d4d" font-weight="normal" font-style="normal" text-anchor="end" textLength="5.23" lengthAdjust="spacingAndGlyphs" >3</text>
<text x="289.20" y="517.40" font-size="9.4" fill="#4d4d4d" font-weight="normal" font-style="normal" text-anchor="end" textLength="40.24" lengthAdjust="spacingAndGlyphs" >5.294 MB</text>
<text x="473.00" y="517.40" font-size="9.4" fill="#4d4d4d" font-weight="normal" font-style="normal" text-anchor="end" textLength="40.24" lengthAdjust="spacingAndGlyphs" >3.308 MB</text>
<text x="657.50" y="517.40" font-size="9.4" fill="#4d4d4d" font-weight="normal" font-style="normal" text-anchor="end" textLength="40.24" lengthAdjust="spacingAndGlyphs" >9.919 MB</text>
<circle cx="713.10" cy="511.00" r="2.35" fill="none" stroke="#3c3c3c" stroke-width="1.35"/>
<circle cx="708.80" cy="515.10" r="1.3" fill="none" stroke="#444" stroke-width="1.15"/>
<rect x="36" y="521.40" width="702" height="1" fill="#ebebeb"/>
<text x="43.60" y="541.45" font-size="9.4" fill="#4d4d4d" font-weight="normal" font-style="normal" text-anchor="start" textLength="84.98" lengthAdjust="spacingAndGlyphs" >Free Virtual Memory</text>
<text x="216.50" y="541.45" font-size="9.4" fill="#4d4d4d" font-weight="normal" font-style="normal" text-anchor="end" textLength="5.23" lengthAdjust="spacingAndGlyphs" >1</text>
<text x="232.20" y="541.45" font-size="9.4" fill="#4d4d4d" font-weight="normal" font-style="normal" text-anchor="start" textLength="54.40" lengthAdjust="spacingAndGlyphs" >134.209.17…</text>
<text x="473.00" y="541.45" font-size="9.4" fill="#4d4d4d" font-weight="normal" font-style="normal" text-anchor="end" textLength="68.99" lengthAdjust="spacingAndGlyphs" >134.208.861 MB</text>
<text x="657.50" y="541.45" font-size="9.4" fill="#4d4d4d" font-weight="normal" font-style="normal" text-anchor="end" textLength="68.99" lengthAdjust="spacingAndGlyphs" >134.209.223 MB</text>
<circle cx="713.10" cy="535.05" r="2.35" fill="none" stroke="#3c3c3c" stroke-width="1.35"/>
<circle cx="708.80" cy="539.15" r="1.3" fill="none" stroke="#444" stroke-width="1.15"/>
<rect x="36" y="545.45" width="702" height="1" fill="#ebebeb"/>
<text x="43.60" y="565.50" font-size="9.4" fill="#4d4d4d" font-weight="normal" font-style="normal" text-anchor="start" textLength="34.49" lengthAdjust="spacingAndGlyphs" >Handles</text>
<text x="216.50" y="565.50" font-size="9.4" fill="#4d4d4d" font-weight="normal" font-style="normal" text-anchor="end" textLength="5.23" lengthAdjust="spacingAndGlyphs" >6</text>
<text x="289.20" y="565.50" font-size="9.4" fill="#4d4d4d" font-weight="normal" font-style="normal" text-anchor="end" textLength="23.52" lengthAdjust="spacingAndGlyphs" >701 #</text>
<text x="473.00" y="565.50" font-size="9.4" fill="#4d4d4d" font-weight="normal" font-style="normal" text-anchor="end" textLength="23.52" lengthAdjust="spacingAndGlyphs" >579 #</text>
<text x="657.50" y="565.50" font-size="9.4" fill="#4d4d4d" font-weight="normal" font-style="normal" text-anchor="end" textLength="23.52" lengthAdjust="spacingAndGlyphs" >772 #</text>
<circle cx="713.10" cy="559.10" r="2.35" fill="none" stroke="#3c3c3c" stroke-width="1.35"/>
<circle cx="708.80" cy="563.20" r="1.3" fill="none" stroke="#444" stroke-width="1.15"/>
<rect x="36" y="569.50" width="702" height="1" fill="#ebebeb"/>
<text x="43.60" y="589.55" font-size="9.4" fill="#4d4d4d" font-weight="normal" font-style="normal" text-anchor="start" textLength="27.17" lengthAdjust="spacingAndGlyphs" >Health</text>
<text x="216.50" y="589.55" font-size="9.4" fill="#4d4d4d" font-weight="normal" font-style="normal" text-anchor="end" textLength="5.23" lengthAdjust="spacingAndGlyphs" >0</text>
<text x="289.20" y="589.55" font-size="9.4" fill="#4d4d4d" font-weight="normal" font-style="normal" text-anchor="end" textLength="26.65" lengthAdjust="spacingAndGlyphs" >100 %</text>
<text x="473.00" y="589.55" font-size="9.4" fill="#4d4d4d" font-weight="normal" font-style="normal" text-anchor="end" textLength="26.65" lengthAdjust="spacingAndGlyphs" >100 %</text>
<text x="657.50" y="589.55" font-size="9.4" fill="#4d4d4d" font-weight="normal" font-style="normal" text-anchor="end" textLength="26.65" lengthAdjust="spacingAndGlyphs" >100 %</text>
<circle cx="713.10" cy="583.15" r="2.35" fill="none" stroke="#3c3c3c" stroke-width="1.35"/>
<circle cx="708.80" cy="587.25" r="1.3" fill="none" stroke="#444" stroke-width="1.15"/>
<rect x="36" y="593.55" width="702" height="1" fill="#ebebeb"/>
<text x="43.60" y="613.60" font-size="9.4" fill="#4d4d4d" font-weight="normal" font-style="normal" text-anchor="start" textLength="77.85" lengthAdjust="spacingAndGlyphs" >Maintenance Days</text>
<text x="216.50" y="613.60" font-size="9.4" fill="#4d4d4d" font-weight="normal" font-style="normal" text-anchor="end" textLength="5.23" lengthAdjust="spacingAndGlyphs" >9</text>
<text x="289.20" y="613.60" font-size="9.4" fill="#4d4d4d" font-weight="normal" font-style="normal" text-anchor="end" textLength="31.36" lengthAdjust="spacingAndGlyphs" >4.662 #</text>
<text x="473.00" y="613.60" font-size="9.4" fill="#4d4d4d" font-weight="normal" font-style="normal" text-anchor="end" textLength="31.36" lengthAdjust="spacingAndGlyphs" >4.662 #</text>
<text x="657.50" y="613.60" font-size="9.4" fill="#4d4d4d" font-weight="normal" font-style="normal" text-anchor="end" textLength="31.36" lengthAdjust="spacingAndGlyphs" >4.698 #</text>
<circle cx="713.10" cy="607.20" r="2.35" fill="none" stroke="#3c3c3c" stroke-width="1.35"/>
<circle cx="708.80" cy="611.30" r="1.3" fill="none" stroke="#444" stroke-width="1.15"/>
<rect x="36" y="617.60" width="702" height="1" fill="#ebebeb"/>
<text x="43.60" y="637.65" font-size="9.4" fill="#4d4d4d" font-weight="normal" font-style="normal" text-anchor="start" textLength="116.53" lengthAdjust="spacingAndGlyphs" >Notifications in Send Queue</text>
<text x="216.50" y="637.65" font-size="9.4" fill="#4d4d4d" font-weight="normal" font-style="normal" text-anchor="end" textLength="10.46" lengthAdjust="spacingAndGlyphs" >13</text>
<text x="289.20" y="637.65" font-size="9.4" fill="#4d4d4d" font-weight="normal" font-style="normal" text-anchor="end" textLength="13.07" lengthAdjust="spacingAndGlyphs" >0 #</text>
<text x="473.00" y="637.65" font-size="9.4" fill="#4d4d4d" font-weight="normal" font-style="normal" text-anchor="end" textLength="13.07" lengthAdjust="spacingAndGlyphs" >0 #</text>
<text x="657.50" y="637.65" font-size="9.4" fill="#4d4d4d" font-weight="normal" font-style="normal" text-anchor="end" textLength="13.07" lengthAdjust="spacingAndGlyphs" >0 #</text>
<circle cx="713.10" cy="631.25" r="2.35" fill="none" stroke="#3c3c3c" stroke-width="1.35"/>
<circle cx="708.80" cy="635.35" r="1.3" fill="none" stroke="#444" stroke-width="1.15"/>
<rect x="36" y="641.65" width="702" height="1" fill="#ebebeb"/>
</svg>
</body></html>
